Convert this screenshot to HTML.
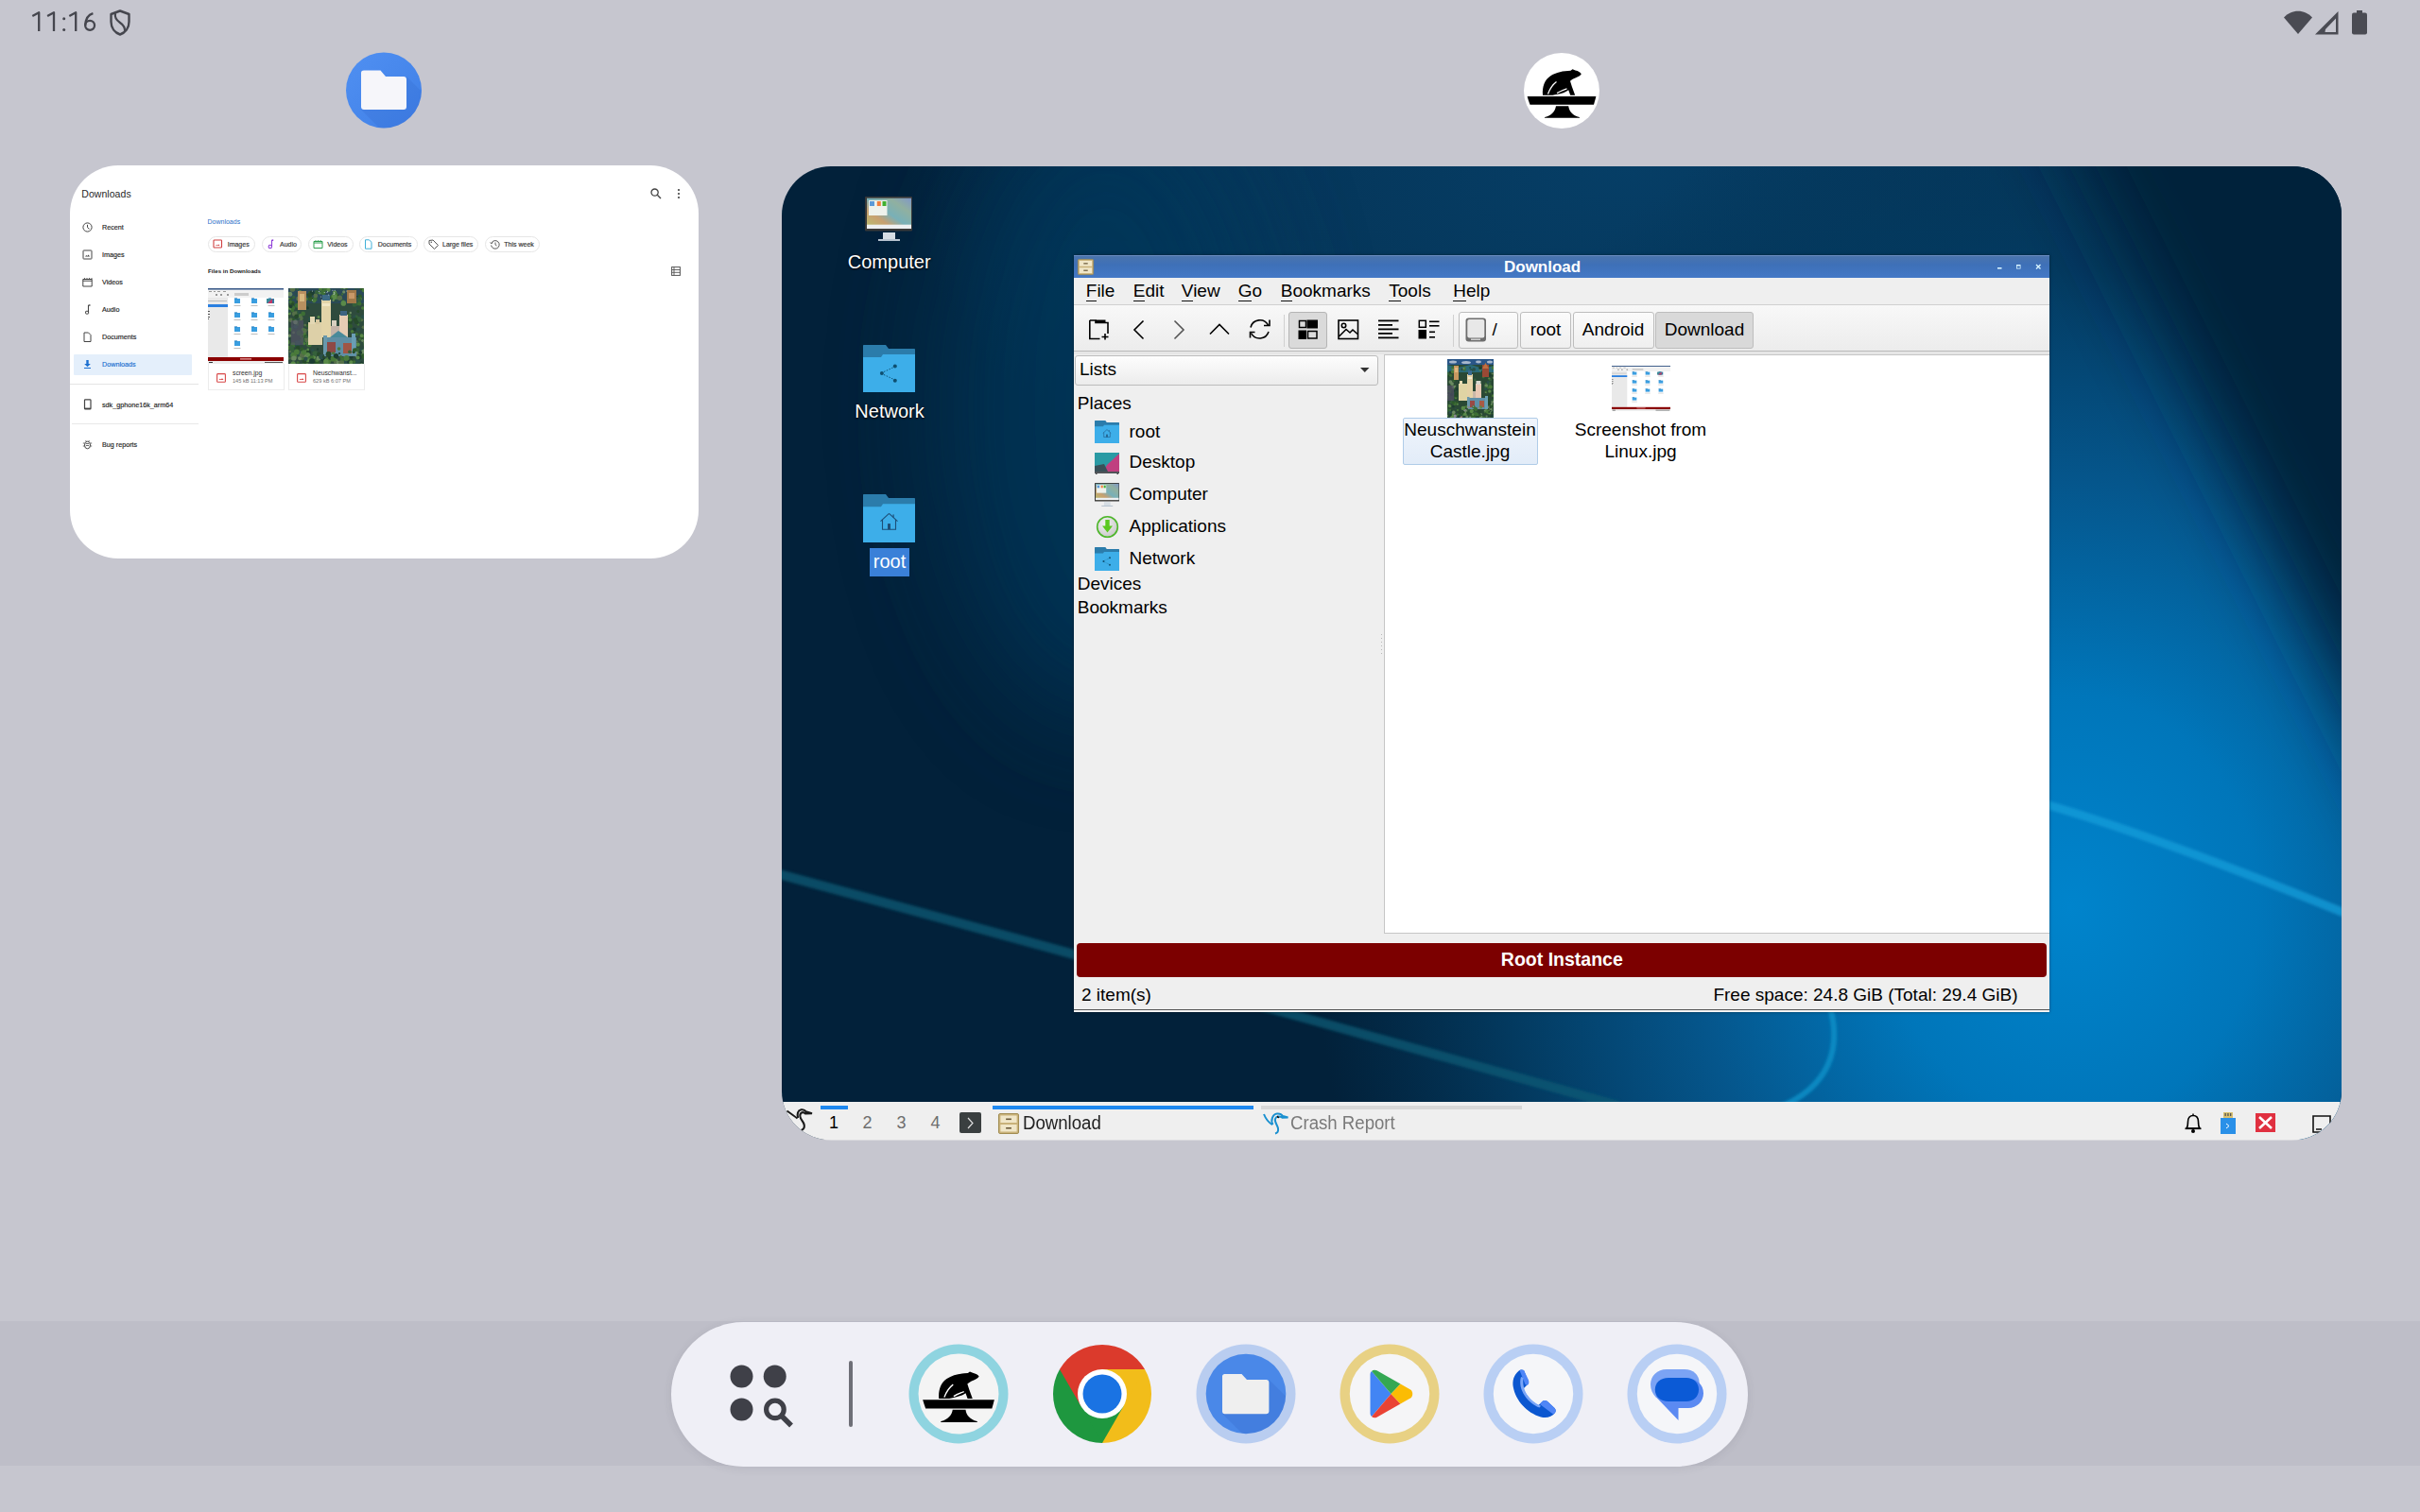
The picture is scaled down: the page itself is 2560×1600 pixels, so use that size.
<!DOCTYPE html>
<html><head><meta charset="utf-8">
<style>
*{margin:0;padding:0;box-sizing:border-box}
html,body{width:2560px;height:1600px;overflow:hidden;background:#c6c6cf;font-family:"Liberation Sans",sans-serif;position:relative}
.a{position:absolute}
.t{position:absolute;white-space:nowrap;line-height:1}
svg{position:absolute;overflow:visible}
svg.c{overflow:hidden}
</style></head><body>
<div class="a" style="left:0px;top:1398px;width:2560px;height:153px;background:#bebec8"></div>
<svg style="left:0px;top:0px;" width="110" height="40" viewBox="0 0 110 40"><g fill="none" stroke="#45464e" stroke-width="2.3" stroke-linejoin="round">
<path d="M34.3 17 L41.2 13.2 V33"/><path d="M50.1 17 L57 13.2 V33"/><path d="M73.3 17 L80.2 13.2 V33"/>
<path d="M98.4 14.2 C94 15.5 90.5 20 90.2 26.9"/><circle cx="95.1" cy="26.85" r="4.95"/></g>
<g fill="#45464e"><circle cx="67.7" cy="19.8" r="1.5"/><circle cx="67.7" cy="31.6" r="1.5"/></g></svg>
<svg style="left:116px;top:10px;" width="22" height="28" viewBox="0 0 22 28"><path d="M11 1.5 L20.5 5 V13 C20.5 19.5 16.5 24.5 11 26.5 C5.5 24.5 1.5 19.5 1.5 13 V5 Z" fill="none" stroke="#45464e" stroke-width="2.4" stroke-linejoin="round"/><path d="M6 4 C5 9 8 12 11 14 C14 16 16.5 19 16 23.5" fill="none" stroke="#45464e" stroke-width="2.2"/></svg>
<svg style="left:2416px;top:11px;" width="90" height="27" viewBox="0 0 90 27"><path d="M0 7.5 C8 -1.5 22 -1.5 30 7.5 L15 25 Z" fill="#4a4b53"/>
<path d="M33 25.5 L57.5 1 V25.5 Z M43.5 23 H55 V8.5 L44 20 Z" fill="#4a4b53" fill-rule="evenodd"/>
<rect x="72" y="2.5" width="16" height="23" rx="2" fill="#4a4b53"/><rect x="77" y="0" width="6" height="4" fill="#4a4b53"/></svg>
<svg style="left:366px;top:55px;" width="80" height="80" viewBox="0 0 80 80"><defs><linearGradient id="fblue" x1="0" y1="0" x2="1" y2="1"><stop offset="0" stop-color="#5090f2"/><stop offset="1" stop-color="#3f7fe6"/></linearGradient></defs>
<circle cx="40" cy="40.5" r="40" fill="url(#fblue)"/><clipPath id="ftc"><circle cx="40" cy="40.5" r="40"/></clipPath><path d="M16 61 H64 V26 L95 57 V95 H50 Z" fill="#2a5cc0" opacity="0.18" clip-path="url(#ftc)"/>
<path d="M16 22 C16 20.3 17.3 19.5 19 19.5 H36.5 L42 26 H61 C62.7 26 64 27.3 64 29 V58 C64 59.7 62.7 61 61 61 H19 C17.3 61 16 59.7 16 58 Z" fill="#f6f6fa"/></svg>
<div class="a" style="left:1612px;top:56px;width:80px;height:80px;border-radius:50%;background:#fff"></div>
<svg style="left:1612px;top:56px;" width="80" height="80" viewBox="0 0 80 80"><g fill="#000">
<path d="M20 44.8 C19.3 36 22 28.5 28 24.5 C34 20.5 42 19 49.5 18.8 L51.5 17.3 L54.5 18.6 C57.5 19.3 59.8 20.5 60.8 22.2 C59.8 23.8 58 25 55 26.2 C52.5 27.2 50.5 28.3 49 29.8 L50.8 35.5 L54.2 44.8 L49.2 44.8 L47.2 39.2 C44.5 41.5 40 43 34 44 L30.5 44.8 Z"/>
<path d="M3.6 45.9 H76.4 L75.2 50.5 L74 54.8 H6.5 L5 50.5 Z"/>
<path d="M34 56.2 H47.2 C48 62 51.5 66 58.8 68 L59.2 68.8 H21.8 L22.2 68 C29.5 66 33 62 34 56.2 Z"/>
</g>
<path d="M25.5 43.5 C27.5 38 30.5 33.5 34.5 30.5 M35 42.5 C38.5 40.5 42 39 45.5 37.8" stroke="#fff" stroke-width="1.3" fill="none"/></svg>
<div class="a" style="left:74px;top:175px;width:665px;height:416px;border-radius:51px;background:#fff;overflow:hidden"></div>
<div class="t" style="left:86.30px;top:199.91px;font-size:10.5px;color:#1f1f1f;letter-spacing:0.05px">Downloads</div>
<svg style="left:688px;top:199px;" width="12" height="12" viewBox="0 0 12 12"><circle cx="4.6" cy="4.6" r="3.6" fill="none" stroke="#444" stroke-width="1.3"/><path d="M7.3 7.3 L11 11" stroke="#444" stroke-width="1.4"/></svg>
<svg style="left:716px;top:199px;" width="4" height="12" viewBox="0 0 4 12"><g fill="#444"><circle cx="2" cy="2" r="1.1"/><circle cx="2" cy="6" r="1.1"/><circle cx="2" cy="10" r="1.1"/></g></svg>
<svg style="left:87px;top:234.5px;" width="11" height="11" viewBox="0 0 11 11"><circle cx="5.5" cy="5.5" r="4.6" fill="none" stroke="#444" stroke-width="1"/><path d="M5.5 2.8 V5.7 L7.6 7.3" fill="none" stroke="#444" stroke-width="1"/></svg>
<div class="t" style="left:108.00px;top:236.71px;font-size:7.2px;color:#222;-webkit-text-stroke:0.15px #222">Recent</div>
<svg style="left:87px;top:263.5px;" width="11" height="11" viewBox="0 0 11 11"><rect x="1" y="1" width="9" height="9" rx="0.6" fill="none" stroke="#444" stroke-width="1"/><path d="M3 7.5 L4.3 6 L5.3 7 L6.5 5.5 L8 7.5 Z" fill="#444"/></svg>
<div class="t" style="left:108.00px;top:265.71px;font-size:7.2px;color:#222;-webkit-text-stroke:0.15px #222">Images</div>
<svg style="left:87px;top:292.9px;" width="11" height="11" viewBox="0 0 11 11"><path d="M0.8 2.5 H10.2 V10 H0.8 Z M0.8 4.2 H10.2" fill="none" stroke="#444" stroke-width="1"/><path d="M2.5 1 V2.5 M5 1 V2.5 M7.5 1 V2.5 M10 1 V2.5" stroke="#444" stroke-width="0.8"/></svg>
<div class="t" style="left:108.00px;top:295.11px;font-size:7.2px;color:#222;-webkit-text-stroke:0.15px #222">Videos</div>
<svg style="left:87px;top:322.0px;" width="11" height="11" viewBox="0 0 11 11"><path d="M6.5 1 V8.5" stroke="#444" stroke-width="1.1"/><path d="M6.5 1 H8.5" stroke="#444" stroke-width="1.4"/><rect x="3.6" y="7.3" width="3" height="2.8" rx="0.5" fill="none" stroke="#444" stroke-width="1"/></svg>
<div class="t" style="left:108.00px;top:324.21px;font-size:7.2px;color:#222;-webkit-text-stroke:0.15px #222">Audio</div>
<svg style="left:87px;top:351.1px;" width="11" height="11" viewBox="0 0 11 11"><path d="M2 1 H6.5 L9 3.5 V10.5 H2 Z" fill="none" stroke="#444" stroke-width="1"/></svg>
<div class="t" style="left:108.00px;top:353.31px;font-size:7.2px;color:#222;-webkit-text-stroke:0.15px #222">Documents</div>
<div class="a" style="left:78px;top:375px;width:125px;height:21.5px;background:#e4effb;border-radius:1px"></div>
<svg style="left:87px;top:380px;" width="11" height="11" viewBox="0 0 11 11"><path d="M4.3 1 H6.7 V5 H8.8 L5.5 8.3 L2.2 5 H4.3 Z" fill="#1b6fd0"/><rect x="2" y="9" width="7" height="1" fill="#1b6fd0"/></svg>
<div class="t" style="left:108.00px;top:382.41px;font-size:7.2px;color:#1b6fd0;-webkit-text-stroke:0.15px #1b6fd0">Downloads</div>
<div class="a" style="left:74px;top:406.3px;width:136px;height:0.8px;background:#e4e4e4"></div>
<svg style="left:87px;top:422px;" width="11" height="12" viewBox="0 0 11 12"><rect x="2.5" y="0.8" width="6.5" height="10.2" rx="0.8" fill="none" stroke="#444" stroke-width="1.2"/><rect x="2.5" y="9.6" width="6.5" height="1.4" fill="#444"/></svg>
<div class="t" style="left:108.00px;top:424.71px;font-size:7.2px;color:#222;-webkit-text-stroke:0.15px #222">sdk_gphone16k_arm64</div>
<div class="a" style="left:76px;top:447.5px;width:134px;height:0.8px;background:#e8e8e8"></div>
<svg style="left:87px;top:464.5px;" width="11" height="11" viewBox="0 0 11 11"><ellipse cx="5.5" cy="6" rx="3" ry="3.8" fill="none" stroke="#444" stroke-width="1"/><path d="M4 4.5 H7 M4 6.5 H7 M0.8 4 H2.5 M8.5 4 H10.2 M0.8 7 H2.5 M8.5 7 H10.2 M3.5 1 L4.5 2.3 M7.5 1 L6.5 2.3" stroke="#444" stroke-width="0.8"/></svg>
<div class="t" style="left:108.00px;top:467.11px;font-size:7.2px;color:#222;-webkit-text-stroke:0.15px #222">Bug reports</div>
<div class="t" style="left:219.50px;top:231.07px;font-size:7px;color:#2a6fc9;">Downloads</div>
<div class="a" style="left:220.2px;top:250.2px;width:49.5px;height:16.4px;border:0.8px solid #e6e6e6;border-radius:8.5px;background:#fff"></div>
<svg style="left:225.2px;top:253.3px;" width="11" height="11" viewBox="0 0 11 11"><rect x="1" y="1" width="8.5" height="8" rx="0.8" fill="none" stroke="#d04040" stroke-width="1.1"/><path d="M3 7 L4 6 L5 6.8 L6.2 5.5 L7.5 7 Z" fill="#d04040"/></svg>
<div class="t" style="left:240.70px;top:255.07px;font-size:7px;color:#303030;-webkit-text-stroke:0.15px #303030">Images</div>
<div class="a" style="left:276.8px;top:250.2px;width:42.69999999999999px;height:16.4px;border:0.8px solid #e6e6e6;border-radius:8.5px;background:#fff"></div>
<svg style="left:281.8px;top:253.3px;" width="11" height="11" viewBox="0 0 11 11"><path d="M5.5 1 V8" stroke="#9040d8" stroke-width="1.1"/><path d="M5.5 1.2 H7.2" stroke="#9040d8" stroke-width="1.6"/><circle cx="3.8" cy="8" r="1.7" fill="none" stroke="#9040d8" stroke-width="1.1"/></svg>
<div class="t" style="left:296.00px;top:255.07px;font-size:7px;color:#303030;-webkit-text-stroke:0.15px #303030">Audio</div>
<div class="a" style="left:325.9px;top:250.2px;width:48.0px;height:16.4px;border:0.8px solid #e6e6e6;border-radius:8.5px;background:#fff"></div>
<svg style="left:330.9px;top:253.3px;" width="11" height="11" viewBox="0 0 11 11"><path d="M1 2.5 H10 V9.5 H1 Z M1 4 H10" fill="none" stroke="#30a050" stroke-width="1"/><path d="M3 1 V2.5 M5.5 1 V2.5 M8 1 V2.5" stroke="#30a050" stroke-width="0.8"/></svg>
<div class="t" style="left:346.30px;top:255.07px;font-size:7px;color:#303030;-webkit-text-stroke:0.15px #303030">Videos</div>
<div class="a" style="left:380.4px;top:250.2px;width:61.60000000000002px;height:16.4px;border:0.8px solid #e6e6e6;border-radius:8.5px;background:#fff"></div>
<svg style="left:385.4px;top:253.3px;" width="11" height="11" viewBox="0 0 11 11"><path d="M1.5 0.8 H5.5 L8 3.3 V10.2 H1.5 Z" fill="none" stroke="#40b0d8" stroke-width="1"/></svg>
<div class="t" style="left:399.80px;top:255.07px;font-size:7px;color:#303030;-webkit-text-stroke:0.15px #303030">Documents</div>
<div class="a" style="left:447.7px;top:250.2px;width:58.69999999999999px;height:16.4px;border:0.8px solid #e6e6e6;border-radius:8.5px;background:#fff"></div>
<svg style="left:452.7px;top:253.3px;" width="11" height="11" viewBox="0 0 11 11"><path d="M1 1.5 L5 1 L10.5 6.5 L6.5 10.5 L1 5 Z" fill="none" stroke="#555" stroke-width="1"/><circle cx="3.3" cy="3.3" r="0.8" fill="#555"/></svg>
<div class="t" style="left:468.00px;top:255.07px;font-size:7px;color:#303030;-webkit-text-stroke:0.15px #303030">Large files</div>
<div class="a" style="left:512.6px;top:250.2px;width:58.69999999999993px;height:16.4px;border:0.8px solid #e6e6e6;border-radius:8.5px;background:#fff"></div>
<svg style="left:517.6px;top:253.3px;" width="11" height="11" viewBox="0 0 11 11"><path d="M2 4 A4.3 4.3 0 1 1 1.6 6.5" fill="none" stroke="#555" stroke-width="1"/><path d="M0.5 3.5 L1.8 5 L3.2 3.6" fill="none" stroke="#555" stroke-width="0.9"/><path d="M6 3.5 V6 L7.5 7" fill="none" stroke="#555" stroke-width="0.9"/></svg>
<div class="t" style="left:533.30px;top:255.07px;font-size:7px;color:#303030;-webkit-text-stroke:0.15px #303030">This week</div>
<div class="t" style="left:220.00px;top:283.75px;font-size:6.2px;color:#202020;font-weight:700;">Files in Downloads</div>
<svg style="left:710px;top:282px;" width="10" height="10" viewBox="0 0 10 10"><rect x="0.6" y="0.6" width="8.8" height="8.8" fill="none" stroke="#555" stroke-width="1"/><path d="M0.6 3.5 H9.4 M0.6 6.3 H9.4 M3 0.6 V9.4" stroke="#555" stroke-width="0.9"/></svg>
<svg class="c" style="left:220px;top:305px;" width="80" height="80" viewBox="0 0 80 80"><rect width="80" height="80" fill="#fff"/><rect x="0" y="0" width="80" height="1.6" fill="#3a5a88"/><rect x="0" y="2" width="80" height="8" fill="#f2f2f2"/><g fill="#999"><rect x="1" y="3" width="3" height="1"/><rect x="6" y="3" width="2" height="1"/><rect x="10" y="3" width="3" height="1"/><rect x="16" y="3" width="3" height="1"/><rect x="8" y="6" width="2" height="2"/><rect x="13" y="6" width="2" height="2"/><rect x="20" y="6" width="2" height="2"/><rect x="28" y="5" width="15" height="3" fill="#ccc"/></g><rect x="0" y="10" width="21" height="63" fill="#e9e9e9"/><rect x="0" y="13" width="20" height="1" fill="#bbb"/><rect x="0" y="17" width="21" height="3" fill="#2a7fe0"/><g fill="#555"><rect x="0" y="24" width="2" height="1"/><rect x="0" y="27" width="2" height="1"/><rect x="0" y="30" width="2" height="1"/><rect x="0" y="32" width="1" height="1"/></g><rect x="28" y="11" width="6" height="5" fill="#3a9ee0"/><rect x="28" y="10.4" width="3" height="1" fill="#2a80c0"/><rect x="27.5" y="18" width="7" height="0.8" fill="#777" opacity=".6"/><rect x="46" y="11" width="6" height="5" fill="#3a9ee0"/><rect x="46" y="10.4" width="3" height="1" fill="#2a80c0"/><rect x="45.5" y="18" width="7" height="0.8" fill="#777" opacity=".6"/><rect x="64" y="11" width="6" height="5" fill="#3a7aa0"/><rect x="64" y="10.4" width="3" height="1" fill="#2a80c0"/><rect x="63.5" y="18" width="7" height="0.8" fill="#777" opacity=".6"/><rect x="28" y="26" width="6" height="5" fill="#3a9ee0"/><rect x="28" y="25.4" width="3" height="1" fill="#2a80c0"/><rect x="27.5" y="33" width="7" height="0.8" fill="#777" opacity=".6"/><rect x="46" y="26" width="6" height="5" fill="#3a9ee0"/><rect x="46" y="25.4" width="3" height="1" fill="#2a80c0"/><rect x="45.5" y="33" width="7" height="0.8" fill="#777" opacity=".6"/><rect x="64" y="26" width="6" height="5" fill="#3a9ee0"/><rect x="64" y="25.4" width="3" height="1" fill="#2a80c0"/><rect x="63.5" y="33" width="7" height="0.8" fill="#777" opacity=".6"/><rect x="28" y="41" width="6" height="5" fill="#3a9ee0"/><rect x="28" y="40.4" width="3" height="1" fill="#2a80c0"/><rect x="27.5" y="48" width="7" height="0.8" fill="#777" opacity=".6"/><rect x="46" y="41" width="6" height="5" fill="#3a9ee0"/><rect x="46" y="40.4" width="3" height="1" fill="#2a80c0"/><rect x="45.5" y="48" width="7" height="0.8" fill="#777" opacity=".6"/><rect x="64" y="41" width="6" height="5" fill="#3a9ee0"/><rect x="64" y="40.4" width="3" height="1" fill="#2a80c0"/><rect x="63.5" y="48" width="7" height="0.8" fill="#777" opacity=".6"/><rect x="28" y="56" width="6" height="5" fill="#3a9ee0"/><rect x="28" y="55.4" width="3" height="1" fill="#2a80c0"/><rect x="27.5" y="63" width="7" height="0.8" fill="#777" opacity=".6"/><rect x="62" y="11" width="6" height="5" fill="#3a8a9a"/><path d="M68 11 V16 H63 Z" fill="#c03a6a"/><rect x="0" y="73" width="80" height="4" fill="#8a0000"/><rect x="34" y="74.3" width="12" height="1.2" fill="#f0b0b0"/><rect x="0" y="77" width="80" height="3" fill="#ededed"/><rect x="1" y="78" width="4" height="1" fill="#333"/><rect x="60" y="78" width="19" height="1" fill="#555"/></svg>
<svg class="c" style="left:305px;top:305px;" width="80" height="80" viewBox="0 0 80 80"><defs><filter id="cb" x="0" y="0" width="100%" height="100%"><feGaussianBlur stdDeviation="0.7"/></filter></defs><g filter="url(#cb)"><rect width="80" height="80" fill="#2f4c3e"/><rect width="80" height="16" fill="#2a4a58"/><circle cx="36.0" cy="45.0" r="1.8" fill="#2a5048"/><circle cx="69.8" cy="14.0" r="2.4" fill="#6a8a60"/><circle cx="23.5" cy="5.6" r="2.5" fill="#2f5a2c"/><circle cx="67.9" cy="3.3" r="1.1" fill="#264a2a"/><circle cx="22.7" cy="-1.6" r="1.2" fill="#5a8a48"/><circle cx="32.2" cy="44.3" r="1.1" fill="#5a8a48"/><circle cx="3.9" cy="62.4" r="1.7" fill="#5a8a48"/><circle cx="30.5" cy="78.5" r="2.5" fill="#2f5a2c"/><circle cx="15.9" cy="75.9" r="1.1" fill="#1f3e30"/><circle cx="80.4" cy="31.4" r="1.1" fill="#264a2a"/><circle cx="25.9" cy="79.0" r="2.4" fill="#3d6e34"/><circle cx="9.3" cy="57.4" r="1.0" fill="#6a8a60"/><circle cx="64.9" cy="12.9" r="2.0" fill="#6a8a60"/><circle cx="40.7" cy="80.8" r="2.4" fill="#1f3e30"/><circle cx="52.1" cy="7.8" r="1.8" fill="#264a2a"/><circle cx="-2.0" cy="70.6" r="2.8" fill="#56704a"/><circle cx="23.5" cy="72.3" r="1.4" fill="#1f3e30"/><circle cx="81.7" cy="48.6" r="2.0" fill="#2f5a2c"/><circle cx="81.1" cy="15.9" r="1.5" fill="#56704a"/><circle cx="5.6" cy="46.9" r="1.4" fill="#56704a"/><circle cx="17.2" cy="49.3" r="2.3" fill="#4a7a3a"/><circle cx="60.1" cy="77.0" r="1.4" fill="#1f3e30"/><circle cx="72.1" cy="48.7" r="1.8" fill="#3d6e34"/><circle cx="7.2" cy="41.0" r="1.5" fill="#1f3e30"/><circle cx="19.6" cy="67.2" r="2.1" fill="#5a8a48"/><circle cx="41.7" cy="76.1" r="2.8" fill="#4a7a3a"/><circle cx="17.2" cy="45.0" r="2.5" fill="#56704a"/><circle cx="4.2" cy="15.8" r="2.6" fill="#2f5a2c"/><circle cx="3.8" cy="32.6" r="1.4" fill="#2f5a2c"/><circle cx="12.8" cy="29.0" r="2.0" fill="#4a7a3a"/><circle cx="5.7" cy="9.6" r="1.8" fill="#34603a"/><circle cx="9.8" cy="0.9" r="1.0" fill="#34603a"/><circle cx="56.9" cy="78.9" r="1.0" fill="#3d6e34"/><circle cx="81.9" cy="4.3" r="2.0" fill="#2f5a2c"/><circle cx="73.6" cy="59.9" r="2.3" fill="#34603a"/><circle cx="27.6" cy="55.6" r="2.6" fill="#1f3e30"/><circle cx="77.3" cy="0.5" r="1.9" fill="#2f5a2c"/><circle cx="49.1" cy="4.7" r="2.2" fill="#5a8a48"/><circle cx="71.9" cy="59.2" r="1.7" fill="#56704a"/><circle cx="5.4" cy="-0.1" r="2.7" fill="#3d6e34"/><circle cx="39.8" cy="49.6" r="1.5" fill="#2f5a2c"/><circle cx="28.9" cy="10.0" r="2.1" fill="#2a5048"/><circle cx="12.2" cy="74.1" r="2.2" fill="#6a8a60"/><circle cx="19.1" cy="51.3" r="2.4" fill="#264a2a"/><circle cx="71.9" cy="30.3" r="2.0" fill="#34603a"/><circle cx="15.6" cy="9.3" r="1.6" fill="#2f5a2c"/><circle cx="57.7" cy="77.8" r="1.5" fill="#4a7a3a"/><circle cx="7.5" cy="37.6" r="2.7" fill="#1f3e30"/><circle cx="64.9" cy="80.7" r="1.2" fill="#3d6e34"/><circle cx="78.5" cy="55.5" r="1.4" fill="#6a8a60"/><circle cx="19.5" cy="58.0" r="2.4" fill="#2a5048"/><circle cx="58.0" cy="13.0" r="1.5" fill="#34603a"/><circle cx="43.3" cy="77.5" r="1.9" fill="#4a7a3a"/><circle cx="31.1" cy="64.5" r="1.2" fill="#1f3e30"/><circle cx="8.9" cy="36.1" r="2.1" fill="#2f5a2c"/><circle cx="29.7" cy="45.8" r="2.4" fill="#34603a"/><circle cx="58.3" cy="15.9" r="2.8" fill="#5a8a48"/><circle cx="74.4" cy="69.9" r="1.6" fill="#3d6e34"/><circle cx="1.1" cy="26.7" r="1.8" fill="#5a8a48"/><circle cx="38.9" cy="0.4" r="2.5" fill="#3d6e34"/><circle cx="34.0" cy="0.9" r="2.0" fill="#4a7a3a"/><circle cx="37.5" cy="82.0" r="2.6" fill="#2a5048"/><circle cx="68.6" cy="55.9" r="2.7" fill="#6a8a60"/><circle cx="45.2" cy="11.8" r="1.9" fill="#2a5048"/><circle cx="19.5" cy="54.4" r="2.7" fill="#56704a"/><circle cx="15.5" cy="69.5" r="2.7" fill="#2a5048"/><circle cx="20.9" cy="39.8" r="1.7" fill="#3d6e34"/><circle cx="79.4" cy="41.3" r="1.7" fill="#56704a"/><circle cx="8.2" cy="5.8" r="1.3" fill="#2a5048"/><circle cx="36.6" cy="75.3" r="2.4" fill="#1f3e30"/><circle cx="20.6" cy="37.7" r="1.2" fill="#1f3e30"/><circle cx="73.7" cy="76.6" r="2.7" fill="#2a5048"/><circle cx="75.7" cy="8.9" r="2.4" fill="#2f5a2c"/><circle cx="1.0" cy="11.1" r="1.0" fill="#5a8a48"/><circle cx="6.8" cy="59.4" r="1.2" fill="#2a5048"/><circle cx="71.8" cy="-0.0" r="2.1" fill="#2a5048"/><circle cx="49.7" cy="43.2" r="2.0" fill="#264a2a"/><circle cx="70.0" cy="17.5" r="2.3" fill="#34603a"/><circle cx="73.8" cy="24.5" r="1.6" fill="#264a2a"/><circle cx="16.3" cy="81.9" r="2.6" fill="#4a7a3a"/><circle cx="72.7" cy="9.1" r="1.2" fill="#1f3e30"/><circle cx="6.1" cy="67.9" r="1.8" fill="#4a7a3a"/><circle cx="14.9" cy="50.8" r="2.4" fill="#3d6e34"/><circle cx="14.9" cy="55.3" r="2.6" fill="#34603a"/><circle cx="7.7" cy="40.5" r="2.4" fill="#2a5048"/><circle cx="81.9" cy="68.0" r="2.4" fill="#6a8a60"/><circle cx="6.9" cy="1.1" r="2.0" fill="#2a5048"/><circle cx="74.0" cy="38.4" r="1.3" fill="#3d6e34"/><circle cx="15.1" cy="68.6" r="2.8" fill="#3d6e34"/><circle cx="46.7" cy="9.3" r="2.2" fill="#3d6e34"/><circle cx="-0.9" cy="56.9" r="2.5" fill="#4a7a3a"/><circle cx="75.4" cy="48.8" r="1.2" fill="#2f5a2c"/><circle cx="25.2" cy="5.1" r="2.5" fill="#1f3e30"/><circle cx="7.8" cy="60.4" r="1.3" fill="#1f3e30"/><circle cx="9.2" cy="25.7" r="2.0" fill="#34603a"/><circle cx="58.7" cy="3.9" r="1.6" fill="#6a8a60"/><circle cx="6.5" cy="72.6" r="2.8" fill="#56704a"/><circle cx="2.2" cy="20.9" r="2.7" fill="#5a8a48"/><circle cx="42.8" cy="30.7" r="2.2" fill="#3d6e34"/><circle cx="62.0" cy="80.3" r="1.0" fill="#56704a"/><circle cx="7.1" cy="17.9" r="1.8" fill="#2a5048"/><circle cx="2.2" cy="14.4" r="1.7" fill="#3d6e34"/><circle cx="19.7" cy="21.2" r="1.6" fill="#2a5048"/><circle cx="40.7" cy="79.2" r="2.0" fill="#3d6e34"/><circle cx="76.1" cy="11.4" r="1.8" fill="#4a7a3a"/><circle cx="69.9" cy="43.5" r="2.1" fill="#1f3e30"/><circle cx="77.4" cy="33.3" r="1.9" fill="#56704a"/><circle cx="20.7" cy="76.1" r="2.2" fill="#5a8a48"/><circle cx="0.3" cy="62.9" r="2.1" fill="#4a7a3a"/><circle cx="16.8" cy="58.4" r="1.5" fill="#264a2a"/><circle cx="1.8" cy="6.3" r="2.5" fill="#6a8a60"/><circle cx="10.1" cy="78.6" r="1.4" fill="#3d6e34"/><circle cx="2.2" cy="33.0" r="1.2" fill="#2f5a2c"/><circle cx="28.0" cy="11.0" r="1.7" fill="#4a7a3a"/><circle cx="42.6" cy="81.8" r="2.7" fill="#4a7a3a"/><circle cx="18.0" cy="7.6" r="2.6" fill="#2a5048"/><circle cx="18.9" cy="80.3" r="2.6" fill="#2f5a2c"/><circle cx="50.8" cy="-1.2" r="1.5" fill="#2f5a2c"/><circle cx="50.4" cy="6.6" r="2.0" fill="#3d6e34"/><circle cx="61.5" cy="74.7" r="1.3" fill="#264a2a"/><circle cx="15.7" cy="26.9" r="2.3" fill="#3d6e34"/><circle cx="65.4" cy="35.6" r="2.5" fill="#264a2a"/><circle cx="10.7" cy="10.9" r="2.5" fill="#56704a"/><circle cx="75.3" cy="33.9" r="1.7" fill="#3d6e34"/><circle cx="24.1" cy="74.5" r="2.1" fill="#5a8a48"/><circle cx="72.1" cy="16.4" r="2.2" fill="#34603a"/><circle cx="28.8" cy="7.9" r="2.3" fill="#56704a"/><circle cx="48.0" cy="73.8" r="2.2" fill="#5a8a48"/><circle cx="24.7" cy="31.6" r="2.6" fill="#264a2a"/><circle cx="5.1" cy="67.6" r="1.0" fill="#1f3e30"/><circle cx="47.7" cy="12.9" r="1.2" fill="#6a8a60"/><circle cx="72.0" cy="21.6" r="1.0" fill="#2a5048"/><circle cx="2.8" cy="11.3" r="1.5" fill="#2f5a2c"/><circle cx="4.9" cy="59.9" r="2.6" fill="#3d6e34"/><circle cx="0.2" cy="52.9" r="1.2" fill="#1f3e30"/><circle cx="18.6" cy="16.5" r="2.4" fill="#2a5048"/><circle cx="65.8" cy="26.0" r="1.2" fill="#6a8a60"/><circle cx="74.9" cy="32.5" r="2.5" fill="#34603a"/><circle cx="69.7" cy="65.7" r="2.5" fill="#6a8a60"/><circle cx="78.5" cy="51.8" r="1.9" fill="#2f5a2c"/><circle cx="65.4" cy="33.4" r="1.8" fill="#4a7a3a"/><circle cx="18.6" cy="11.6" r="2.1" fill="#4a7a3a"/><circle cx="21.0" cy="72.4" r="1.8" fill="#3d6e34"/><circle cx="23.5" cy="11.1" r="2.7" fill="#2f5a2c"/><circle cx="61.3" cy="-0.6" r="1.9" fill="#2f5a2c"/><circle cx="40.7" cy="35.1" r="1.7" fill="#5a8a48"/><circle cx="50.6" cy="77.1" r="2.0" fill="#5a8a48"/><circle cx="38.7" cy="31.8" r="2.2" fill="#3d6e34"/><circle cx="77.6" cy="65.3" r="1.7" fill="#2a5048"/><circle cx="64.8" cy="63.0" r="2.4" fill="#2f5a2c"/><circle cx="11.2" cy="25.0" r="1.5" fill="#2a5048"/><circle cx="9.0" cy="60.3" r="2.1" fill="#2a5048"/><circle cx="42.9" cy="10.7" r="2.4" fill="#2f5a2c"/><circle cx="15.2" cy="75.0" r="1.3" fill="#4a7a3a"/><circle cx="4.9" cy="20.7" r="2.3" fill="#3d6e34"/><circle cx="72.7" cy="56.3" r="1.1" fill="#56704a"/><circle cx="13.8" cy="14.2" r="2.2" fill="#6a8a60"/><circle cx="15.5" cy="43.6" r="1.9" fill="#4a7a3a"/><circle cx="77.5" cy="79.0" r="1.6" fill="#1f3e30"/><circle cx="4.4" cy="23.7" r="1.8" fill="#3d6e34"/><circle cx="31.1" cy="36.8" r="2.5" fill="#6a8a60"/><circle cx="-1.0" cy="29.7" r="2.3" fill="#264a2a"/><circle cx="22.7" cy="7.5" r="2.4" fill="#264a2a"/><circle cx="73.7" cy="10.8" r="2.1" fill="#2a5048"/><circle cx="61.0" cy="78.1" r="2.4" fill="#2a5048"/><circle cx="59.4" cy="25.7" r="2.0" fill="#34603a"/><circle cx="50.2" cy="9.0" r="2.1" fill="#4a7a3a"/><circle cx="13.1" cy="31.8" r="2.5" fill="#56704a"/><circle cx="57.1" cy="6.4" r="1.1" fill="#3d6e34"/><circle cx="67.2" cy="75.9" r="1.3" fill="#264a2a"/><circle cx="31.7" cy="56.8" r="2.4" fill="#56704a"/><circle cx="23.8" cy="35.1" r="2.0" fill="#264a2a"/><circle cx="49.4" cy="11.3" r="2.4" fill="#5a8a48"/><circle cx="9.9" cy="57.9" r="2.8" fill="#2a5048"/><circle cx="81.9" cy="57.4" r="2.7" fill="#56704a"/><circle cx="77.4" cy="50.7" r="1.4" fill="#3d6e34"/><circle cx="9.4" cy="38.1" r="1.8" fill="#34603a"/><circle cx="25.7" cy="76.0" r="1.7" fill="#6a8a60"/><circle cx="72.2" cy="36.0" r="2.3" fill="#264a2a"/><circle cx="73.9" cy="43.6" r="2.0" fill="#2a5048"/><circle cx="74.9" cy="12.2" r="2.3" fill="#34603a"/><circle cx="48.5" cy="8.3" r="2.5" fill="#5a8a48"/><circle cx="28.5" cy="11.9" r="2.1" fill="#3d6e34"/><circle cx="76.1" cy="81.9" r="1.2" fill="#1f3e30"/><circle cx="11.3" cy="32.6" r="1.1" fill="#2a5048"/><circle cx="54.4" cy="10.2" r="2.7" fill="#56704a"/><circle cx="6.6" cy="27.0" r="2.6" fill="#56704a"/><circle cx="81.5" cy="68.4" r="2.5" fill="#1f3e30"/><circle cx="67.3" cy="7.9" r="1.2" fill="#2a5048"/><circle cx="0.0" cy="74.2" r="1.5" fill="#56704a"/><circle cx="73.6" cy="59.5" r="2.1" fill="#5a8a48"/><circle cx="72.1" cy="71.7" r="1.4" fill="#6a8a60"/><circle cx="18.4" cy="71.3" r="2.8" fill="#6a8a60"/><circle cx="23.7" cy="31.2" r="1.4" fill="#3d6e34"/><circle cx="81.9" cy="59.4" r="2.6" fill="#34603a"/><circle cx="70.8" cy="33.4" r="2.4" fill="#264a2a"/><circle cx="4.0" cy="41.6" r="1.2" fill="#2a5048"/><circle cx="59.2" cy="0.0" r="1.3" fill="#6a8a60"/><circle cx="73.2" cy="66.5" r="1.7" fill="#34603a"/><circle cx="10.0" cy="63.2" r="2.4" fill="#264a2a"/><circle cx="15.0" cy="70.2" r="2.2" fill="#2f5a2c"/><circle cx="14.4" cy="68.4" r="1.6" fill="#6a8a60"/><circle cx="-0.7" cy="51.4" r="2.3" fill="#2a5048"/><circle cx="15.0" cy="51.1" r="1.3" fill="#2f5a2c"/><circle cx="78.8" cy="21.0" r="1.8" fill="#4a7a3a"/><circle cx="26.1" cy="78.4" r="2.4" fill="#1f3e30"/><circle cx="4.6" cy="16.8" r="1.6" fill="#264a2a"/><circle cx="20.6" cy="58.5" r="1.9" fill="#5a8a48"/><circle cx="64.4" cy="29.3" r="2.2" fill="#3d6e34"/><circle cx="75.8" cy="54.0" r="1.5" fill="#3d6e34"/><circle cx="36.9" cy="4.4" r="2.7" fill="#3d6e34"/><circle cx="42.6" cy="1.8" r="2.1" fill="#5a8a48"/><circle cx="11.8" cy="81.0" r="1.3" fill="#4a7a3a"/><circle cx="21.4" cy="44.0" r="1.3" fill="#4a7a3a"/><circle cx="81.0" cy="0.8" r="1.8" fill="#56704a"/><circle cx="30.3" cy="76.1" r="1.9" fill="#4a7a3a"/><circle cx="3.4" cy="63.2" r="2.6" fill="#34603a"/><circle cx="41.7" cy="77.9" r="1.3" fill="#4a7a3a"/><circle cx="7.4" cy="34.6" r="2.2" fill="#2a5048"/><circle cx="17.8" cy="39.1" r="1.4" fill="#56704a"/><circle cx="79.5" cy="2.4" r="1.8" fill="#4a7a3a"/><circle cx="65.7" cy="40.3" r="2.3" fill="#2f5a2c"/><circle cx="4.1" cy="74.2" r="2.0" fill="#2a5048"/><circle cx="2.5" cy="33.7" r="2.3" fill="#56704a"/><circle cx="57.1" cy="78.4" r="1.2" fill="#56704a"/><circle cx="80.8" cy="10.1" r="1.8" fill="#2f5a2c"/><circle cx="-1.7" cy="32.4" r="1.9" fill="#3d6e34"/><circle cx="4.4" cy="0.9" r="2.8" fill="#56704a"/><circle cx="17.3" cy="19.3" r="2.0" fill="#264a2a"/><circle cx="33.1" cy="5.2" r="1.4" fill="#5a8a48"/><circle cx="26.3" cy="80.4" r="2.1" fill="#2f5a2c"/><circle cx="11.5" cy="47.2" r="2.8" fill="#34603a"/><circle cx="45.7" cy="74.6" r="2.6" fill="#4a7a3a"/><circle cx="27.2" cy="13.4" r="2.0" fill="#4a7a3a"/><circle cx="50.6" cy="13.3" r="1.9" fill="#2a5048"/><circle cx="30.2" cy="4.1" r="2.2" fill="#34603a"/><circle cx="77.7" cy="50.2" r="1.9" fill="#5a8a48"/><circle cx="16.3" cy="6.7" r="1.1" fill="#34603a"/><circle cx="9.5" cy="18.2" r="2.5" fill="#3d6e34"/><circle cx="-0.3" cy="25.1" r="1.7" fill="#3d6e34"/><circle cx="69.8" cy="30.0" r="1.5" fill="#2a5048"/><circle cx="39.0" cy="13.8" r="1.9" fill="#4a7a3a"/><circle cx="0.7" cy="24.2" r="1.8" fill="#2a5048"/><circle cx="71.9" cy="68.1" r="2.0" fill="#6a8a60"/><circle cx="32.0" cy="30.5" r="1.4" fill="#5a8a48"/><circle cx="69.2" cy="60.8" r="1.9" fill="#2f5a2c"/><circle cx="65.9" cy="80.0" r="1.5" fill="#3d6e34"/><circle cx="75.2" cy="16.2" r="2.2" fill="#3d6e34"/><circle cx="78.2" cy="70.9" r="1.4" fill="#5a8a48"/><circle cx="5.6" cy="33.9" r="1.7" fill="#2f5a2c"/><circle cx="39.2" cy="76.2" r="1.5" fill="#5a8a48"/><circle cx="16.6" cy="75.7" r="1.4" fill="#4a7a3a"/><circle cx="60.4" cy="74.2" r="2.4" fill="#6a8a60"/><circle cx="56.8" cy="-0.1" r="1.7" fill="#34603a"/><circle cx="74.4" cy="74.6" r="1.5" fill="#1f3e30"/><circle cx="27.2" cy="72.9" r="2.0" fill="#5a8a48"/><circle cx="66.5" cy="72.5" r="2.2" fill="#1f3e30"/><circle cx="49.7" cy="78.2" r="1.7" fill="#56704a"/><circle cx="2.0" cy="43.6" r="2.1" fill="#3d6e34"/><circle cx="21.2" cy="67.7" r="2.6" fill="#1f3e30"/><circle cx="79.2" cy="30.3" r="2.4" fill="#2a5048"/><circle cx="20.9" cy="39.6" r="1.9" fill="#2f5a2c"/><circle cx="10.6" cy="14.2" r="1.4" fill="#264a2a"/><circle cx="17.7" cy="-1.9" r="2.0" fill="#1f3e30"/><circle cx="-1.7" cy="43.9" r="2.5" fill="#2a5048"/><circle cx="4.6" cy="67.2" r="2.6" fill="#34603a"/><circle cx="20.2" cy="6.7" r="1.0" fill="#264a2a"/><circle cx="56.4" cy="55.7" r="2.5" fill="#4a7a3a"/><circle cx="22.7" cy="32.8" r="1.7" fill="#2a5048"/><circle cx="57.3" cy="75.1" r="2.3" fill="#3d6e34"/><circle cx="81.1" cy="66.7" r="2.6" fill="#5a8a48"/><circle cx="7.5" cy="35.9" r="2.4" fill="#6a8a60"/><circle cx="1.4" cy="50.2" r="1.7" fill="#6a8a60"/><circle cx="2.5" cy="19.3" r="1.9" fill="#1f3e30"/><circle cx="19.2" cy="51.3" r="1.7" fill="#34603a"/><circle cx="13.4" cy="69.9" r="1.4" fill="#56704a"/><circle cx="67.6" cy="45.7" r="1.8" fill="#4a7a3a"/><circle cx="8.5" cy="29.7" r="2.2" fill="#264a2a"/><circle cx="52.8" cy="79.8" r="1.8" fill="#4a7a3a"/><circle cx="20.5" cy="20.8" r="1.5" fill="#1f3e30"/><circle cx="11.2" cy="81.8" r="2.6" fill="#264a2a"/><circle cx="22.0" cy="59.4" r="2.8" fill="#3d6e34"/><circle cx="32.0" cy="74.0" r="2.5" fill="#6a8a60"/><circle cx="12.4" cy="3.7" r="1.8" fill="#5a8a48"/><circle cx="16.8" cy="58.6" r="1.7" fill="#4a7a3a"/><circle cx="80.4" cy="30.7" r="2.2" fill="#2a5048"/><circle cx="21.7" cy="70.8" r="1.8" fill="#3d6e34"/><circle cx="44.7" cy="73.3" r="2.6" fill="#1f3e30"/><circle cx="8.1" cy="25.2" r="1.0" fill="#56704a"/><rect x="10" y="3" width="9" height="20" fill="#b89060"/><rect x="12" y="6" width="5" height="8" fill="#d8b880"/><rect x="62" y="2" width="10" height="14" fill="#a07848"/><rect x="64" y="5" width="6" height="6" fill="#c89868"/><rect x="3" y="34" width="13" height="26" fill="#5a5470" opacity=".55"/><rect x="21" y="36" width="15" height="24" fill="#ddd0a8"/><rect x="23" y="30" width="5" height="8" fill="#e4d8b4"/><rect x="29" y="33" width="4" height="5" fill="#d8c8a0"/><rect x="35" y="12" width="10" height="40" fill="#e2d4a8"/><rect x="36" y="7" width="8" height="6" fill="#3e6a84"/><rect x="36" y="16" width="8" height="3" fill="#f0e6c4"/><rect x="54" y="28" width="9" height="28" fill="#e6ccb4"/><rect x="55" y="24" width="7" height="5" fill="#3e6482"/><rect x="45" y="40" width="9" height="14" fill="#c4b4a8"/><rect x="46" y="34" width="5" height="6" fill="#d8d0c0"/><rect x="38" y="52" width="34" height="20" fill="#5e8ea4"/><rect x="41" y="57" width="9" height="11" fill="#8e4a44"/><rect x="58" y="58" width="9" height="11" fill="#a05444"/><rect x="67" y="48" width="4" height="22" fill="#6a9eb4"/><rect x="37" y="50" width="4" height="20" fill="#6898ac"/><path d="M44 52 L53 45 L63 52 Z" fill="#4a8a9a"/><circle cx="25.8" cy="65.5" r="1.6" fill="#2a5048"/><circle cx="20.8" cy="64.9" r="1.3" fill="#5a8a48"/><circle cx="53.6" cy="64.1" r="1.8" fill="#4a7a3a"/><circle cx="79.8" cy="67.6" r="2.8" fill="#6a8a60"/><circle cx="2.6" cy="70.3" r="2.2" fill="#2a5048"/><circle cx="4.6" cy="73.9" r="2.4" fill="#56704a"/><circle cx="20.2" cy="67.4" r="1.7" fill="#264a2a"/><circle cx="79.5" cy="72.0" r="2.7" fill="#2f5a2c"/><circle cx="14.1" cy="64.5" r="1.5" fill="#3d6e34"/><circle cx="54.0" cy="68.9" r="1.2" fill="#2a5048"/><circle cx="24.8" cy="73.3" r="1.2" fill="#264a2a"/><circle cx="5.1" cy="70.6" r="2.6" fill="#5a8a48"/><circle cx="64.8" cy="78.3" r="2.5" fill="#1f3e30"/><circle cx="24.6" cy="73.6" r="2.4" fill="#3d6e34"/><circle cx="74.9" cy="72.7" r="2.7" fill="#1f3e30"/><circle cx="20.0" cy="80.4" r="1.2" fill="#56704a"/><circle cx="11.3" cy="69.8" r="2.5" fill="#2a5048"/><circle cx="52.6" cy="78.6" r="1.9" fill="#6a8a60"/><circle cx="28.3" cy="69.0" r="2.8" fill="#34603a"/><circle cx="47.5" cy="68.8" r="1.6" fill="#4a7a3a"/><circle cx="16.9" cy="77.4" r="2.2" fill="#264a2a"/><circle cx="14.2" cy="65.9" r="1.5" fill="#34603a"/><circle cx="14.6" cy="64.4" r="1.9" fill="#2f5a2c"/><circle cx="32.3" cy="69.8" r="2.2" fill="#264a2a"/><circle cx="1.7" cy="67.1" r="1.3" fill="#56704a"/><circle cx="8.7" cy="81.8" r="2.0" fill="#264a2a"/><circle cx="39.9" cy="78.0" r="2.8" fill="#5a8a48"/><circle cx="5.6" cy="71.0" r="2.9" fill="#4a7a3a"/><circle cx="62.2" cy="73.5" r="1.2" fill="#1f3e30"/><circle cx="72.9" cy="65.0" r="2.3" fill="#34603a"/><circle cx="71.0" cy="79.4" r="2.3" fill="#2a5048"/><circle cx="77.5" cy="80.6" r="1.4" fill="#6a8a60"/><circle cx="34.9" cy="72.4" r="2.7" fill="#2a5048"/><circle cx="18.4" cy="74.8" r="2.2" fill="#2a5048"/><circle cx="73.6" cy="73.5" r="2.0" fill="#5a8a48"/><circle cx="47.5" cy="74.7" r="2.9" fill="#4a7a3a"/><circle cx="43.0" cy="69.9" r="1.7" fill="#56704a"/><circle cx="25.0" cy="77.3" r="3.0" fill="#1f3e30"/><circle cx="4.2" cy="81.4" r="2.6" fill="#6a8a60"/><circle cx="8.9" cy="67.4" r="2.9" fill="#4a7a3a"/><circle cx="66.3" cy="78.4" r="2.1" fill="#5a8a48"/><circle cx="5.2" cy="79.7" r="2.5" fill="#5a8a48"/><circle cx="41.4" cy="70.3" r="1.6" fill="#2f5a2c"/><circle cx="69.2" cy="67.5" r="1.7" fill="#264a2a"/><circle cx="5.9" cy="74.0" r="2.6" fill="#6a8a60"/><circle cx="70.1" cy="65.3" r="2.1" fill="#2f5a2c"/><circle cx="61.7" cy="73.9" r="2.8" fill="#4a7a3a"/><circle cx="64.9" cy="67.2" r="1.8" fill="#34603a"/><circle cx="76.4" cy="68.0" r="1.7" fill="#1f3e30"/><circle cx="14.5" cy="71.0" r="2.7" fill="#56704a"/><circle cx="37.3" cy="72.8" r="1.4" fill="#264a2a"/><circle cx="42.6" cy="69.7" r="2.9" fill="#264a2a"/><circle cx="44.8" cy="81.9" r="1.9" fill="#34603a"/><circle cx="56.0" cy="79.2" r="2.9" fill="#56704a"/><circle cx="16.7" cy="67.8" r="2.6" fill="#4a7a3a"/><circle cx="55.5" cy="72.4" r="1.4" fill="#3d6e34"/><circle cx="20.7" cy="70.2" r="2.3" fill="#5a8a48"/><circle cx="15.7" cy="81.9" r="2.4" fill="#34603a"/><circle cx="69.6" cy="77.9" r="1.6" fill="#3d6e34"/><circle cx="50.5" cy="71.6" r="2.7" fill="#1f3e30"/><circle cx="32.3" cy="3.6" r="0.5" fill="#c8d8e0"/><circle cx="25.4" cy="3.1" r="0.5" fill="#c8d8e0"/><circle cx="42.6" cy="7.0" r="0.5" fill="#c8d8e0"/><circle cx="41.7" cy="3.4" r="0.5" fill="#c8d8e0"/><circle cx="25.4" cy="12.5" r="0.5" fill="#c8d8e0"/><circle cx="61.9" cy="2.9" r="0.5" fill="#c8d8e0"/><circle cx="48.5" cy="4.7" r="0.5" fill="#c8d8e0"/><circle cx="41.0" cy="4.4" r="0.5" fill="#c8d8e0"/><circle cx="38.2" cy="4.6" r="0.5" fill="#c8d8e0"/><circle cx="48.1" cy="6.4" r="0.5" fill="#c8d8e0"/><circle cx="34.7" cy="9.0" r="0.5" fill="#c8d8e0"/><circle cx="49.0" cy="5.2" r="0.5" fill="#c8d8e0"/><circle cx="49.1" cy="2.2" r="0.5" fill="#c8d8e0"/><circle cx="46.9" cy="2.2" r="0.5" fill="#c8d8e0"/></g></svg>
<div class="a" style="left:220px;top:385px;width:80.5px;height:28px;border:0.8px solid #ececec;border-top:none;background:#fff"></div>
<div class="a" style="left:305px;top:385px;width:80.5px;height:28px;border:0.8px solid #ececec;border-top:none;background:#fff"></div>
<svg style="left:229px;top:394.5px;" width="10" height="10" viewBox="0 0 10 10"><rect x="0.6" y="0.6" width="8.8" height="8.6" rx="0.8" fill="none" stroke="#d84848" stroke-width="1.1"/><path d="M2.5 7 L3.8 5.8 L4.8 6.6 L6 5.3 L7.5 7 Z" fill="#d84848"/></svg>
<div class="t" style="left:246.00px;top:392.24px;font-size:6.8px;color:#303030;">screen.jpg</div>
<div class="t" style="left:246.00px;top:401.46px;font-size:5.6px;color:#707070;">145 kB 11:13 PM</div>
<svg style="left:314px;top:394.5px;" width="10" height="10" viewBox="0 0 10 10"><rect x="0.6" y="0.6" width="8.8" height="8.6" rx="0.8" fill="none" stroke="#d84848" stroke-width="1.1"/><path d="M2.5 7 L3.8 5.8 L4.8 6.6 L6 5.3 L7.5 7 Z" fill="#d84848"/></svg>
<div class="t" style="left:331.00px;top:392.24px;font-size:6.8px;color:#303030;">Neuschwanst...</div>
<div class="t" style="left:331.00px;top:401.46px;font-size:5.6px;color:#707070;">629 kB 6:07 PM</div>
<div class="a" style="left:0;top:0;width:2560px;height:1600px;clip-path:inset(176px 83px 393.5px 827px round 52px)">
<svg style="left:826px;top:175px" width="1651" height="1031" viewBox="826 175 1651 1031">
<defs>
<radialGradient id="glow" gradientUnits="userSpaceOnUse" cx="2190" cy="960" r="800" gradientTransform="translate(2190 960) scale(1 1.125) translate(-2190 -960)">
<stop offset="0" stop-color="#0084cc"/><stop offset="0.25" stop-color="#0076ba"/><stop offset="0.5" stop-color="#05568c"/><stop offset="0.75" stop-color="#033a60"/><stop offset="1" stop-color="#033558" stop-opacity="0"/>
</radialGradient>
<radialGradient id="topglow" gradientUnits="userSpaceOnUse" cx="1720" cy="175" r="760" gradientTransform="translate(1720 175) scale(1 0.6) translate(-1720 -175)">
<stop offset="0" stop-color="#063e66"/><stop offset="0.6" stop-color="#053558"/><stop offset="1" stop-color="#053558" stop-opacity="0"/>
</radialGradient>
<filter id="bl40" x="-50%" y="-50%" width="200%" height="200%"><feGaussianBlur stdDeviation="40"/></filter>
<filter id="bl60" x="-80%" y="-80%" width="260%" height="260%"><feGaussianBlur stdDeviation="60"/></filter>
<filter id="bl2"><feGaussianBlur stdDeviation="1.5"/></filter>
</defs>
<rect x="826" y="175" width="1651" height="1031" fill="#02213a"/>
<rect x="826" y="175" width="1651" height="1031" fill="url(#topglow)"/>
<rect x="826" y="175" width="1651" height="1031" fill="url(#glow)"/>
<ellipse cx="1170" cy="430" rx="170" ry="330" fill="#04385c" opacity="0.75" filter="url(#bl60)"/>
<polygon points="2135,40 2900,40 2900,1100 2665,1100" fill="#02203a" filter="url(#bl40)"/>
<path d="M820 924 Q1250 1040 1712 1170" fill="none" stroke="#0c5a74" stroke-width="10" opacity="0.75" filter="url(#bl2)"/>
<path d="M2160 850 C2230 870 2330 905 2480 966" fill="none" stroke="#18a0dc" stroke-width="9" opacity="0.7" filter="url(#bl2)"/>
<path d="M1936 1066 C1948 1110 1935 1150 1882 1172" fill="none" stroke="#1090c8" stroke-width="6" opacity="0.85" filter="url(#bl2)"/>
</svg>
<svg style="left:915px;top:208px;" width="50" height="47" viewBox="0 0 50 47"><g transform="scale(1.0000 1.0000)">
<defs><linearGradient id="scr50" x1="0" y1="1" x2="1" y2="0"><stop offset="0" stop-color="#b8c070"/><stop offset="0.3" stop-color="#c8a070"/><stop offset="0.5" stop-color="#78b0b8"/><stop offset="0.75" stop-color="#90b0a0"/><stop offset="1" stop-color="#8098c8"/></linearGradient></defs>
<rect x="0" y="0" width="50" height="36.5" rx="1" fill="#383838"/>
<rect x="2" y="1.7" width="47" height="32.3" fill="url(#scr50)"/>
<rect x="4" y="4" width="19.5" height="16" fill="#eef2ec"/>
<rect x="5" y="5" width="5" height="5" fill="#5b9ad8"/><rect x="12.8" y="5" width="4" height="5" fill="#f08040"/><rect x="18.5" y="5" width="4" height="5" fill="#40b030"/>
<rect x="2" y="29.7" width="47" height="4.3" fill="#eef0f2"/>
<rect x="19" y="38" width="13" height="8" fill="#d6dde4"/><rect x="14" y="45" width="23" height="2" fill="#b8c4d0"/>
</g></svg>
<div class="t" style="left:940.70px;top:266.67px;font-size:20px;color:#fff;text-shadow:0 0 2px rgba(0,0,0,.9),0 1px 2px rgba(0,0,0,.8);transform:translateX(-50%)">Computer</div>
<svg style="left:913px;top:365px;" width="55" height="50" viewBox="0 0 55 50"><g transform="scale(1.0000 1.0000)"><path d="M0 1 C0 0.4 0.4 0 1 0 H24 L27 4 H54 C54.6 4 55 4.4 55 5 V20 H0 Z" fill="#2b7cab"/><path d="M0 13 H19 L21 10 H55 V50 H0 Z" fill="#3daee9"/><g fill="#0e4f70"><circle cx="33.8" cy="22.4" r="2"/><circle cx="19.9" cy="30" r="2"/><circle cx="33.8" cy="37.7" r="2"/></g><path d="M31.5 24 L22 28.5 M22 31.5 L31.5 36" stroke="#0e4f70" stroke-width="1" stroke-dasharray="1.4 1.6"/></g></svg>
<div class="t" style="left:941.00px;top:425.07px;font-size:20px;color:#fff;text-shadow:0 0 2px rgba(0,0,0,.9),0 1px 2px rgba(0,0,0,.8);transform:translateX(-50%)">Network</div>
<svg style="left:913px;top:523px;" width="55" height="51" viewBox="0 0 55 51"><g transform="scale(1.0000 1.0200)"><path d="M0 1 C0 0.4 0.4 0 1 0 H24 L27 4 H54 C54.6 4 55 4.4 55 5 V20 H0 Z" fill="#2b7cab"/><path d="M0 13 H19 L21 10 H55 V50 H0 Z" fill="#3daee9"/><path d="M27.5 20 L18.5 28 M27.5 20 L36.5 28 M20.5 26.5 V36.5 H34.5 V26.5" fill="none" stroke="#1d4f78" stroke-width="1.1"/><rect x="26" y="30.5" width="3" height="6" fill="#1d4f78"/><rect x="31.5" y="21" width="1.2" height="3" fill="#1d4f78"/></g></svg>
<div class="a" style="left:920px;top:580px;width:42px;height:30px;background:#3a80d8"></div>
<div class="t" style="left:941.00px;top:584.07px;font-size:20px;color:#fff;transform:translateX(-50%)">root</div>
<div class="a" style="left:1136px;top:270px;width:1032px;height:801px;background:#efefef;box-shadow:0 0 3px rgba(0,0,0,.4)"></div>
<div class="a" style="left:1136px;top:270px;width:1032px;height:24px;background:linear-gradient(#4a74ad,#3e70b8 40%,#4479c6);border-top:1px solid #6a8cc0"></div>
<svg style="left:1140px;top:274px;" width="17" height="17" viewBox="0 0 17 17"><g transform="scale(0.7391 0.7727)"><rect x="0.5" y="0.5" width="22" height="21" rx="1.5" fill="#c9b27a" stroke="#a08a50" stroke-width="1"/>
<rect x="2.5" y="2.5" width="18" height="7.5" fill="#f0e6c8"/><rect x="2.5" y="12" width="18" height="7.5" fill="#f0e6c8"/>
<rect x="8.5" y="5.5" width="6" height="1.6" fill="#6a5a3a"/><rect x="8.5" y="15" width="6" height="1.6" fill="#6a5a3a"/></g></svg>
<div class="t" style="left:1631.60px;top:274.01px;font-size:17px;color:#fff;font-weight:700;transform:translateX(-50%)">Download</div>
<svg style="left:2110px;top:278px;" width="52" height="10" viewBox="0 0 52 10"><g fill="#d8f4ff"><rect x="3" y="5" width="4.5" height="1.6"/><rect x="23" y="2" width="4.5" height="4.5"/><rect x="23.8" y="3.5" width="3" height="2.2" fill="#3e72bc"/><path d="M44 2 L48.5 6.5 M48.5 2 L44 6.5" stroke="#d8f4ff" stroke-width="1.4"/></g></svg>
<div class="a" style="left:1136px;top:294px;width:1032px;height:28px;background:#efefef"></div>
<div class="a" style="left:1136px;top:322px;width:1032px;height:1px;background:#cfcfcf"></div>
<div class="t" style="left:1148.80px;top:297.92px;font-size:19px;color:#000;">File</div>
<div class="a" style="left:1148.5px;top:317.5px;width:11.5px;height:1.5px;background:#111"></div>
<div class="t" style="left:1198.80px;top:297.92px;font-size:19px;color:#000;">Edit</div>
<div class="a" style="left:1198.5px;top:317.5px;width:12px;height:1.5px;background:#111"></div>
<div class="t" style="left:1249.80px;top:297.92px;font-size:19px;color:#000;">View</div>
<div class="a" style="left:1249.5px;top:317.5px;width:12px;height:1.5px;background:#111"></div>
<div class="t" style="left:1309.80px;top:297.92px;font-size:19px;color:#000;">Go</div>
<div class="a" style="left:1309.5px;top:317.5px;width:14px;height:1.5px;background:#111"></div>
<div class="t" style="left:1354.80px;top:297.92px;font-size:19px;color:#000;">Bookmarks</div>
<div class="a" style="left:1354.5px;top:317.5px;width:12.5px;height:1.5px;background:#111"></div>
<div class="t" style="left:1469.30px;top:297.92px;font-size:19px;color:#000;">Tools</div>
<div class="a" style="left:1469.0px;top:317.5px;width:12.5px;height:1.5px;background:#111"></div>
<div class="t" style="left:1537.30px;top:297.92px;font-size:19px;color:#000;">Help</div>
<div class="a" style="left:1537.0px;top:317.5px;width:14px;height:1.5px;background:#111"></div>
<div class="a" style="left:1136px;top:323px;width:1032px;height:48px;background:linear-gradient(#f8f8f8,#ececec)"></div>
<div class="a" style="left:1136px;top:371px;width:1032px;height:1px;background:#b9b9b9"></div>
<div class="a" style="left:1136px;top:372px;width:1032px;height:3px;background:#e6e6e6"></div>
<div class="a" style="left:1363px;top:330px;width:41px;height:39px;background:#dadada;border:1px solid #b5b5b5;border-radius:3px"></div>
<div class="a" style="left:1358px;top:333px;width:1px;height:34px;background:#d0d0d0"></div>
<div class="a" style="left:1537px;top:333px;width:1px;height:34px;background:#d0d0d0"></div>
<svg style="left:0;top:0" width="2560" height="1600" viewBox="0 0 2560 1600"><g fill="none" stroke="#000" stroke-width="1.6"><path d="M1152.8 339 H1159 V341.5 H1172 V353"/><path d="M1152.8 339 V358.5 H1163.5"/><rect x="1159" y="338.5" width="10.5" height="3" fill="#000" stroke="none"/><path d="M1169 353 V359.5 M1165.5 356.5 H1172.5"/><path d="M1209.5 339.5 L1200 349 L1209.5 358.5"/><path d="M1242.5 339.5 L1252 349 L1242.5 358.5" stroke="#555"/><path d="M1280 353.5 L1290 343.5 L1300 353.5"/><path d="M1341.5 344 A10 10 0 0 0 1323 346.5"/><path d="M1323.5 352.5 A10 10 0 0 0 1342 351"/><path d="M1337 344.5 H1343 V338.5"/><path d="M1327.5 351.5 H1322.5 V357.5"/></g><g fill="#000"><rect x="1382.5" y="338.5" width="11.5" height="9"/><rect x="1373.5" y="349.5" width="8.5" height="9.5"/></g><g fill="none" stroke="#000" stroke-width="1.5"><rect x="1374.5" y="339.5" width="7" height="7"/><rect x="1383.5" y="350.5" width="9.5" height="7.5"/></g><g fill="none" stroke="#000" stroke-width="1.6"><rect x="1416" y="339" width="20.5" height="19.5"/><circle cx="1421.5" cy="344.5" r="2.2"/><path d="M1416.5 356 L1424 348.5 L1428 352 L1431 349 L1436 353.5"/></g><g fill="#000"><rect x="1458" y="338.5" width="21.5" height="1.8"/><rect x="1458" y="343" width="15" height="1.8"/><rect x="1458" y="347.5" width="21.5" height="1.8"/><rect x="1458" y="352" width="15" height="1.8"/><rect x="1458" y="356.5" width="21.5" height="1.8"/></g><g fill="#000"><rect x="1512" y="339.5" width="10.5" height="1.6"/><rect x="1512" y="344" width="10.5" height="1.6"/><rect x="1512" y="350.5" width="6" height="1.6"/><rect x="1512" y="356" width="6" height="1.6"/><rect x="1500.5" y="349" width="8.5" height="9.5"/></g><rect x="1501.3" y="339.3" width="7" height="7" fill="none" stroke="#000" stroke-width="1.5"/></svg>
<div class="a" style="left:1543px;top:330px;width:63px;height:39px;background:linear-gradient(#fbfbfb,#efefef);border:1px solid #bdbdbd;border-radius:3px"></div>
<div class="a" style="left:1608px;top:330px;width:54px;height:39px;background:linear-gradient(#fbfbfb,#efefef);border:1px solid #bdbdbd;border-radius:3px"></div>
<div class="a" style="left:1664px;top:330px;width:86px;height:39px;background:linear-gradient(#fbfbfb,#efefef);border:1px solid #bdbdbd;border-radius:3px"></div>
<div class="a" style="left:1751px;top:330px;width:104px;height:39px;background:#d9d9d9;border:1px solid #bdbdbd;border-radius:3px"></div>
<svg style="left:1550px;top:336px;" width="23" height="26" viewBox="0 0 23 26"><rect x="0.5" y="0.5" width="21.5" height="25" rx="3" fill="#6e6e6e"/><rect x="2.3" y="2" width="18" height="19.5" rx="2" fill="#e8e8e8"/><rect x="6" y="22.5" width="10" height="1.5" fill="#cfcfcf"/></svg>
<div class="t" style="left:1578.50px;top:339.12px;font-size:19px;color:#000;">/</div>
<div class="t" style="left:1635.00px;top:339.12px;font-size:19px;color:#000;transform:translateX(-50%)">root</div>
<div class="t" style="left:1706.50px;top:339.12px;font-size:19px;color:#000;transform:translateX(-50%)">Android</div>
<div class="t" style="left:1803.00px;top:339.12px;font-size:19px;color:#000;transform:translateX(-50%)">Download</div>
<div class="a" style="left:1137px;top:376px;width:321px;height:32px;background:linear-gradient(#fdfdfd,#ececec);border:1px solid #bcbcbc;border-radius:3px"></div>
<div class="t" style="left:1142.00px;top:380.82px;font-size:19px;color:#000;">Lists</div>
<svg style="left:1439px;top:389px;" width="10" height="6" viewBox="0 0 10 6"><path d="M0 0 H9.5 L4.75 5 Z" fill="#333"/></svg>
<div class="t" style="left:1139.80px;top:416.72px;font-size:19px;color:#000;">Places</div>
<svg style="left:1158px;top:445px;" width="26" height="24" viewBox="0 0 26 24"><g transform="scale(0.4727 0.4800)"><path d="M0 1 C0 0.4 0.4 0 1 0 H24 L27 4 H54 C54.6 4 55 4.4 55 5 V20 H0 Z" fill="#2b7cab"/><path d="M0 13 H19 L21 10 H55 V50 H0 Z" fill="#3daee9"/><path d="M27.5 20 L18.5 28 M27.5 20 L36.5 28 M20.5 26.5 V36.5 H34.5 V26.5" fill="none" stroke="#1d4f78" stroke-width="1.1"/><rect x="26" y="30.5" width="3" height="6" fill="#1d4f78"/><rect x="31.5" y="21" width="1.2" height="3" fill="#1d4f78"/></g></svg>
<svg style="left:1158px;top:479px;" width="26" height="23" viewBox="0 0 26 23"><path d="M0 0 H26 V20 H0 Z" fill="#2a9aa4"/><path d="M26 1 V20 H9 L13 13 Z" fill="#c04080"/><path d="M0 14 L10 12 L14 20 H0 Z" fill="#3a5058"/><rect x="0" y="20" width="26" height="2" fill="#505458"/><rect x="1" y="22" width="1.5" height="1" fill="#444"/><rect x="23.5" y="22" width="1.5" height="1" fill="#444"/></svg>
<svg style="left:1158px;top:511px;" width="26" height="25" viewBox="0 0 26 25"><g transform="scale(0.5200 0.5319)">
<defs><linearGradient id="scr26" x1="0" y1="1" x2="1" y2="0"><stop offset="0" stop-color="#b8c070"/><stop offset="0.3" stop-color="#c8a070"/><stop offset="0.5" stop-color="#78b0b8"/><stop offset="0.75" stop-color="#90b0a0"/><stop offset="1" stop-color="#8098c8"/></linearGradient></defs>
<rect x="0" y="0" width="50" height="36.5" rx="1" fill="#383838"/>
<rect x="2" y="1.7" width="47" height="32.3" fill="url(#scr26)"/>
<rect x="4" y="4" width="19.5" height="16" fill="#eef2ec"/>
<rect x="5" y="5" width="5" height="5" fill="#5b9ad8"/><rect x="12.8" y="5" width="4" height="5" fill="#f08040"/><rect x="18.5" y="5" width="4" height="5" fill="#40b030"/>
<rect x="2" y="29.7" width="47" height="4.3" fill="#eef0f2"/>
<rect x="19" y="38" width="13" height="8" fill="#d6dde4"/><rect x="14" y="45" width="23" height="2" fill="#b8c4d0"/>
</g></svg>
<svg style="left:1159px;top:545px;" width="25" height="25" viewBox="0 0 25 25"><defs><radialGradient id="appg" cx="0.4" cy="0.35" r="0.7"><stop offset="0" stop-color="#f4f4f4"/><stop offset="1" stop-color="#c4c4c4"/></radialGradient></defs><circle cx="12.5" cy="12.5" r="11.8" fill="url(#appg)"/><circle cx="12.5" cy="12.5" r="10.8" fill="none" stroke="#4cb828" stroke-width="1.5"/><path d="M10.3 5 H14.7 V11.5 H18 L12.5 18.5 L7 11.5 H10.3 Z" fill="#5cc820"/></svg>
<svg style="left:1158px;top:579px;" width="26" height="25" viewBox="0 0 26 25"><g transform="scale(0.4727 0.5000)"><path d="M0 1 C0 0.4 0.4 0 1 0 H24 L27 4 H54 C54.6 4 55 4.4 55 5 V20 H0 Z" fill="#2b7cab"/><path d="M0 13 H19 L21 10 H55 V50 H0 Z" fill="#3daee9"/><g fill="#0e4f70"><circle cx="33.8" cy="22.4" r="2"/><circle cx="19.9" cy="30" r="2"/><circle cx="33.8" cy="37.7" r="2"/></g><path d="M31.5 24 L22 28.5 M22 31.5 L31.5 36" stroke="#0e4f70" stroke-width="1" stroke-dasharray="1.4 1.6"/></g></svg>
<div class="t" style="left:1194.50px;top:447.22px;font-size:19px;color:#000;">root</div>
<div class="t" style="left:1194.50px;top:479.42px;font-size:19px;color:#000;">Desktop</div>
<div class="t" style="left:1194.50px;top:512.92px;font-size:19px;color:#000;">Computer</div>
<div class="t" style="left:1194.50px;top:546.62px;font-size:19px;color:#000;">Applications</div>
<div class="t" style="left:1194.50px;top:580.52px;font-size:19px;color:#000;">Network</div>
<div class="t" style="left:1139.80px;top:608.22px;font-size:19px;color:#000;">Devices</div>
<div class="t" style="left:1139.80px;top:632.82px;font-size:19px;color:#000;">Bookmarks</div>
<svg style="left:1460px;top:670px;" width="3" height="24" viewBox="0 0 3 24"><g fill="#b8b8b8"><rect x="1" y="1" width="1" height="1"/><rect x="1" y="5" width="1" height="1"/><rect x="1" y="9" width="1" height="1"/><rect x="1" y="13" width="1" height="1"/><rect x="1" y="17" width="1" height="1"/><rect x="1" y="21" width="1" height="1"/></g></svg>
<div class="a" style="left:1464px;top:375px;width:704px;height:613px;background:#fff;border:1px solid #c6c6c6;border-right:none"></div>
<svg class="c" style="left:1531px;top:380px;" width="49" height="62" viewBox="0 0 49 62"><defs><filter id="cpb" x="0" y="0" width="100%" height="100%"><feGaussianBlur stdDeviation="0.45"/></filter></defs><g filter="url(#cpb)"><rect width="49" height="62" fill="#2c4a36"/><rect width="49" height="6" fill="#2a5688"/><g fill="#c8d0dc" opacity=".8"><ellipse cx="6" cy="3" rx="4" ry="1.5"/><ellipse cx="20" cy="3.5" rx="5" ry="1.6"/><ellipse cx="33" cy="3" rx="3" ry="1.4"/><ellipse cx="45" cy="3" rx="3" ry="1.5"/></g><path d="M0 6 L12 9 L25 6 L38 10 L49 7 V14 H0 Z" fill="#2a6a78"/><circle cx="47.1" cy="49.0" r="1.9" fill="#2f5a2c"/><circle cx="41.9" cy="50.9" r="1.0" fill="#2f5a2c"/><circle cx="44.9" cy="15.1" r="1.3" fill="#264a2a"/><circle cx="43.2" cy="30.0" r="1.7" fill="#3d6e34"/><circle cx="6.1" cy="42.3" r="0.9" fill="#2f5a2c"/><circle cx="48.6" cy="9.3" r="1.7" fill="#4a7a3a"/><circle cx="43.5" cy="24.6" r="1.9" fill="#2a5048"/><circle cx="43.7" cy="42.8" r="0.9" fill="#264a2a"/><circle cx="48.3" cy="57.3" r="1.1" fill="#34603a"/><circle cx="20.2" cy="59.5" r="1.0" fill="#34603a"/><circle cx="40.7" cy="35.0" r="1.1" fill="#6a8a60"/><circle cx="46.9" cy="60.3" r="1.2" fill="#1f3e30"/><circle cx="-0.1" cy="51.5" r="1.2" fill="#2f5a2c"/><circle cx="47.7" cy="15.4" r="1.0" fill="#6a8a60"/><circle cx="39.7" cy="55.4" r="0.7" fill="#3d6e34"/><circle cx="9.6" cy="36.7" r="1.2" fill="#4a7a3a"/><circle cx="16.3" cy="58.9" r="1.4" fill="#5a8a48"/><circle cx="29.6" cy="58.9" r="0.7" fill="#34603a"/><circle cx="41.1" cy="33.6" r="1.2" fill="#2f5a2c"/><circle cx="48.9" cy="43.5" r="1.7" fill="#34603a"/><circle cx="41.8" cy="16.1" r="1.7" fill="#4a7a3a"/><circle cx="31.2" cy="51.6" r="0.8" fill="#1f3e30"/><circle cx="6.2" cy="58.8" r="1.5" fill="#4a7a3a"/><circle cx="48.8" cy="33.5" r="1.3" fill="#34603a"/><circle cx="6.5" cy="29.4" r="2.0" fill="#4a7a3a"/><circle cx="3.5" cy="23.7" r="1.7" fill="#2a5048"/><circle cx="17.4" cy="51.4" r="1.7" fill="#2f5a2c"/><circle cx="34.2" cy="24.9" r="1.5" fill="#2f5a2c"/><circle cx="23.2" cy="50.8" r="1.1" fill="#5a8a48"/><circle cx="22.6" cy="53.1" r="1.5" fill="#34603a"/><circle cx="41.2" cy="27.9" r="1.8" fill="#6a8a60"/><circle cx="48.8" cy="60.7" r="1.4" fill="#2a5048"/><circle cx="49.0" cy="19.7" r="1.2" fill="#6a8a60"/><circle cx="20.2" cy="42.3" r="1.4" fill="#1f3e30"/><circle cx="14.4" cy="38.9" r="1.1" fill="#2f5a2c"/><circle cx="9.0" cy="40.7" r="1.5" fill="#4a7a3a"/><circle cx="10.2" cy="46.0" r="1.5" fill="#2f5a2c"/><circle cx="49.3" cy="61.9" r="0.9" fill="#4a7a3a"/><circle cx="4.7" cy="61.3" r="1.3" fill="#2a5048"/><circle cx="0.8" cy="34.1" r="1.2" fill="#3d6e34"/><circle cx="29.1" cy="21.8" r="0.7" fill="#1f3e30"/><circle cx="47.6" cy="55.2" r="1.8" fill="#2a5048"/><circle cx="18.1" cy="10.9" r="1.5" fill="#3d6e34"/><circle cx="14.1" cy="36.7" r="1.1" fill="#34603a"/><circle cx="40.7" cy="31.6" r="1.8" fill="#2a5048"/><circle cx="27.8" cy="60.7" r="2.0" fill="#3d6e34"/><circle cx="16.9" cy="57.2" r="0.7" fill="#3d6e34"/><circle cx="15.6" cy="58.5" r="1.4" fill="#34603a"/><circle cx="31.1" cy="57.1" r="1.2" fill="#1f3e30"/><circle cx="48.8" cy="35.6" r="1.3" fill="#1f3e30"/><circle cx="18.6" cy="55.2" r="0.9" fill="#5a8a48"/><circle cx="0.0" cy="60.0" r="1.1" fill="#5a8a48"/><circle cx="6.3" cy="10.3" r="1.6" fill="#6a8a60"/><circle cx="11.5" cy="11.2" r="0.9" fill="#1f3e30"/><circle cx="-0.3" cy="37.8" r="1.1" fill="#6a8a60"/><circle cx="6.9" cy="62.4" r="1.1" fill="#6a8a60"/><circle cx="25.4" cy="55.6" r="1.8" fill="#3d6e34"/><circle cx="-0.2" cy="15.8" r="1.1" fill="#34603a"/><circle cx="5.8" cy="9.2" r="1.4" fill="#3d6e34"/><circle cx="44.3" cy="38.5" r="0.7" fill="#1f3e30"/><circle cx="29.3" cy="46.2" r="1.5" fill="#1f3e30"/><circle cx="44.8" cy="34.1" r="1.7" fill="#5a8a48"/><circle cx="41.7" cy="46.5" r="1.3" fill="#5a8a48"/><circle cx="7.4" cy="46.5" r="1.9" fill="#34603a"/><circle cx="1.5" cy="48.6" r="1.0" fill="#3d6e34"/><circle cx="35.9" cy="61.8" r="2.0" fill="#6a8a60"/><circle cx="1.5" cy="54.5" r="1.0" fill="#3d6e34"/><circle cx="45.8" cy="17.1" r="1.5" fill="#1f3e30"/><circle cx="3.7" cy="46.0" r="1.3" fill="#34603a"/><circle cx="46.9" cy="29.2" r="0.8" fill="#5a8a48"/><circle cx="6.7" cy="43.1" r="1.4" fill="#2a5048"/><circle cx="11.0" cy="54.0" r="1.1" fill="#4a7a3a"/><circle cx="40.2" cy="55.6" r="1.3" fill="#1f3e30"/><circle cx="8.1" cy="47.5" r="1.6" fill="#3d6e34"/><circle cx="28.2" cy="10.9" r="1.8" fill="#2a5048"/><circle cx="29.3" cy="21.9" r="1.3" fill="#34603a"/><circle cx="4.5" cy="37.7" r="1.4" fill="#1f3e30"/><circle cx="1.7" cy="17.1" r="1.9" fill="#264a2a"/><circle cx="37.2" cy="13.5" r="1.3" fill="#264a2a"/><circle cx="6.1" cy="42.7" r="1.2" fill="#264a2a"/><circle cx="13.8" cy="59.2" r="1.6" fill="#1f3e30"/><circle cx="14.1" cy="43.1" r="1.2" fill="#2f5a2c"/><circle cx="9.3" cy="11.1" r="1.9" fill="#6a8a60"/><circle cx="14.3" cy="59.5" r="1.9" fill="#34603a"/><circle cx="7.1" cy="29.2" r="1.2" fill="#6a8a60"/><circle cx="6.8" cy="22.7" r="1.1" fill="#4a7a3a"/><circle cx="44.7" cy="27.6" r="1.7" fill="#34603a"/><circle cx="46.8" cy="46.1" r="1.6" fill="#6a8a60"/><circle cx="42.3" cy="17.4" r="1.7" fill="#34603a"/><circle cx="7.3" cy="19.9" r="0.7" fill="#264a2a"/><circle cx="32.5" cy="42.3" r="1.6" fill="#5a8a48"/><circle cx="8.4" cy="28.5" r="0.8" fill="#6a8a60"/><circle cx="7.3" cy="22.0" r="1.6" fill="#2f5a2c"/><circle cx="31.9" cy="32.3" r="0.7" fill="#2f5a2c"/><circle cx="0.7" cy="54.1" r="1.8" fill="#34603a"/><circle cx="46.9" cy="47.7" r="1.0" fill="#6a8a60"/><circle cx="3.7" cy="34.4" r="1.6" fill="#2f5a2c"/><circle cx="24.4" cy="51.2" r="0.8" fill="#1f3e30"/><circle cx="21.7" cy="43.6" r="1.9" fill="#264a2a"/><circle cx="8.1" cy="36.5" r="1.2" fill="#2a5048"/><circle cx="10.9" cy="59.1" r="1.7" fill="#3d6e34"/><circle cx="26.6" cy="58.8" r="1.5" fill="#264a2a"/><circle cx="20.6" cy="50.5" r="1.4" fill="#4a7a3a"/><circle cx="36.0" cy="58.3" r="1.1" fill="#6a8a60"/><circle cx="44.5" cy="63.0" r="1.4" fill="#4a7a3a"/><circle cx="40.8" cy="25.9" r="0.9" fill="#3d6e34"/><circle cx="48.4" cy="45.0" r="1.1" fill="#6a8a60"/><circle cx="34.7" cy="11.6" r="1.0" fill="#5a8a48"/><circle cx="44.0" cy="56.8" r="0.8" fill="#34603a"/><circle cx="18.4" cy="50.5" r="0.7" fill="#5a8a48"/><circle cx="32.4" cy="50.0" r="1.4" fill="#6a8a60"/><circle cx="6.3" cy="46.1" r="1.7" fill="#2f5a2c"/><circle cx="40.4" cy="29.6" r="0.9" fill="#3d6e34"/><circle cx="15.5" cy="10.8" r="1.4" fill="#2a5048"/><circle cx="0.4" cy="15.6" r="2.0" fill="#34603a"/><circle cx="21.2" cy="22.9" r="0.7" fill="#2a5048"/><circle cx="-0.4" cy="40.6" r="1.8" fill="#3d6e34"/><circle cx="6.3" cy="50.3" r="1.3" fill="#1f3e30"/><circle cx="5.0" cy="26.1" r="1.9" fill="#6a8a60"/><circle cx="24.1" cy="9.1" r="0.9" fill="#1f3e30"/><circle cx="45.4" cy="21.7" r="1.6" fill="#34603a"/><circle cx="9.3" cy="39.4" r="1.2" fill="#264a2a"/><circle cx="17.7" cy="52.7" r="1.8" fill="#2f5a2c"/><circle cx="41.4" cy="35.5" r="0.7" fill="#4a7a3a"/><circle cx="46.0" cy="52.0" r="1.7" fill="#6a8a60"/><circle cx="33.8" cy="55.6" r="1.5" fill="#264a2a"/><circle cx="18.2" cy="9.5" r="1.4" fill="#4a7a3a"/><circle cx="40.5" cy="10.2" r="1.6" fill="#5a8a48"/><circle cx="28.5" cy="59.5" r="1.4" fill="#2f5a2c"/><circle cx="26.4" cy="52.1" r="1.2" fill="#2f5a2c"/><circle cx="3.0" cy="13.7" r="1.2" fill="#1f3e30"/><circle cx="14.6" cy="59.2" r="1.1" fill="#264a2a"/><circle cx="2.7" cy="49.7" r="1.6" fill="#5a8a48"/><circle cx="44.8" cy="46.1" r="1.8" fill="#2a5048"/><circle cx="9.6" cy="36.9" r="1.9" fill="#264a2a"/><circle cx="16.4" cy="51.4" r="1.3" fill="#2f5a2c"/><circle cx="44.4" cy="46.2" r="2.0" fill="#264a2a"/><circle cx="44.2" cy="20.5" r="1.1" fill="#5a8a48"/><circle cx="39.7" cy="13.2" r="0.8" fill="#1f3e30"/><circle cx="27.9" cy="53.8" r="1.8" fill="#1f3e30"/><circle cx="45.1" cy="25.3" r="1.1" fill="#34603a"/><circle cx="8.5" cy="10.6" r="0.9" fill="#2a5048"/><circle cx="41.6" cy="60.7" r="1.1" fill="#6a8a60"/><circle cx="31.9" cy="59.0" r="1.0" fill="#6a8a60"/><circle cx="41.8" cy="9.1" r="1.6" fill="#3d6e34"/><circle cx="3.7" cy="17.2" r="1.5" fill="#3d6e34"/><circle cx="38.2" cy="18.9" r="1.4" fill="#3d6e34"/><circle cx="17.6" cy="53.0" r="1.0" fill="#34603a"/><circle cx="24.3" cy="61.0" r="1.9" fill="#3d6e34"/><circle cx="24.0" cy="59.6" r="1.6" fill="#2f5a2c"/><circle cx="5.0" cy="34.9" r="1.2" fill="#264a2a"/><circle cx="45.8" cy="29.6" r="1.1" fill="#6a8a60"/><circle cx="31.8" cy="50.4" r="0.8" fill="#3d6e34"/><circle cx="25.5" cy="11.7" r="1.2" fill="#264a2a"/><circle cx="48.3" cy="38.9" r="1.3" fill="#4a7a3a"/><circle cx="26.6" cy="29.9" r="0.8" fill="#34603a"/><circle cx="5.6" cy="13.5" r="1.8" fill="#4a7a3a"/><circle cx="17.4" cy="9.9" r="1.0" fill="#6a8a60"/><circle cx="47.8" cy="55.9" r="0.8" fill="#264a2a"/><circle cx="8.9" cy="52.4" r="0.7" fill="#2a5048"/><circle cx="3.4" cy="24.1" r="1.9" fill="#6a8a60"/><circle cx="24.9" cy="11.9" r="1.2" fill="#2a5048"/><circle cx="21.2" cy="41.1" r="1.5" fill="#2f5a2c"/><circle cx="10.0" cy="31.8" r="1.6" fill="#1f3e30"/><circle cx="45.7" cy="29.4" r="2.0" fill="#4a7a3a"/><circle cx="44.5" cy="17.0" r="1.7" fill="#1f3e30"/><circle cx="41.5" cy="13.1" r="1.2" fill="#1f3e30"/><circle cx="7.6" cy="33.7" r="0.8" fill="#1f3e30"/><circle cx="0.8" cy="31.1" r="0.9" fill="#2f5a2c"/><circle cx="40.4" cy="13.6" r="0.9" fill="#34603a"/><circle cx="44.7" cy="57.2" r="1.4" fill="#5a8a48"/><circle cx="4.7" cy="43.7" r="1.2" fill="#34603a"/><circle cx="45.2" cy="38.6" r="1.3" fill="#264a2a"/><circle cx="48.2" cy="16.6" r="0.7" fill="#2f5a2c"/><circle cx="35.0" cy="9.4" r="1.7" fill="#1f3e30"/><circle cx="10.9" cy="47.7" r="1.0" fill="#5a8a48"/><circle cx="1.9" cy="36.0" r="0.7" fill="#1f3e30"/><circle cx="44.1" cy="50.9" r="1.4" fill="#6a8a60"/><circle cx="22.0" cy="44.4" r="1.2" fill="#2a5048"/><rect x="7" y="7" width="5" height="15" fill="#c89860"/><rect x="8" y="9" width="3" height="5" fill="#e0b880"/><rect x="37" y="6" width="7" height="13" fill="#9a4a34"/><path d="M37 10 L40.5 4 L44 10 Z" fill="#c07040"/><rect x="0" y="28" width="7" height="16" fill="#5a5070" opacity=".6"/><rect x="12" y="26" width="9" height="18" fill="#e0d4a4"/><rect x="13" y="23" width="3" height="4" fill="#e8dcb4"/><rect x="21" y="16" width="6" height="30" fill="#e4d2a6"/><rect x="22" y="12" width="4" height="5" fill="#3a6a90"/><rect x="22" y="19" width="4" height="2" fill="#f4ead0"/><rect x="30" y="26" width="6" height="20" fill="#e8c8b4"/><rect x="30.5" y="23" width="5" height="4" fill="#d8d8d0"/><rect x="27" y="34" width="3" height="10" fill="#c8b8a8"/><rect x="22" y="41" width="20" height="12" fill="#5e90a8"/><rect x="24" y="44" width="5" height="7" fill="#9a4a44"/><rect x="34" y="44" width="5" height="7" fill="#a85a44"/><rect x="40" y="39" width="3" height="14" fill="#6aa0b4"/><rect x="21" y="40" width="2.5" height="12" fill="#6a98ac"/><circle cx="19.1" cy="54.9" r="2.0" fill="#8a8a90"/><circle cx="45.7" cy="51.0" r="1.4" fill="#264a2a"/><circle cx="25.9" cy="55.1" r="2.1" fill="#5a8a48"/><circle cx="40.1" cy="54.9" r="1.4" fill="#6a8a60"/><circle cx="17.2" cy="56.4" r="1.6" fill="#264a2a"/><circle cx="27.8" cy="50.5" r="1.8" fill="#3d6e34"/><circle cx="16.8" cy="51.9" r="2.2" fill="#5a8a48"/><circle cx="39.9" cy="56.3" r="1.0" fill="#3d6e34"/><circle cx="12.8" cy="60.8" r="1.7" fill="#1f3e30"/><circle cx="8.1" cy="60.3" r="1.8" fill="#8a8a90"/><circle cx="42.9" cy="55.7" r="2.1" fill="#4a7a3a"/><circle cx="29.1" cy="57.4" r="2.1" fill="#34603a"/><circle cx="27.5" cy="50.1" r="0.9" fill="#8a8a90"/><circle cx="24.2" cy="61.3" r="0.9" fill="#8a8a90"/><circle cx="20.2" cy="55.4" r="1.5" fill="#6a8a60"/><circle cx="30.0" cy="52.9" r="2.1" fill="#3d6e34"/><circle cx="34.6" cy="59.3" r="1.6" fill="#2f5a2c"/><circle cx="3.3" cy="56.0" r="1.7" fill="#2a5048"/><circle cx="35.3" cy="50.9" r="1.7" fill="#5a8a48"/><circle cx="5.9" cy="59.8" r="1.2" fill="#5a8a48"/><circle cx="14.7" cy="61.4" r="1.3" fill="#a08070"/><circle cx="44.2" cy="56.1" r="1.0" fill="#264a2a"/><circle cx="46.2" cy="54.1" r="1.7" fill="#6a8a60"/><circle cx="4.3" cy="54.6" r="0.9" fill="#1f3e30"/><circle cx="21.4" cy="56.7" r="1.4" fill="#264a2a"/><circle cx="6.8" cy="56.4" r="1.8" fill="#6a8a60"/><circle cx="45.8" cy="54.5" r="0.8" fill="#1f3e30"/><circle cx="13.1" cy="56.4" r="1.6" fill="#264a2a"/><circle cx="27.2" cy="58.6" r="1.4" fill="#5a8a48"/><circle cx="41.0" cy="53.8" r="1.0" fill="#5a8a48"/><circle cx="20.8" cy="61.0" r="1.5" fill="#6a8a60"/><circle cx="30.8" cy="58.3" r="2.1" fill="#3d6e34"/><circle cx="33.8" cy="51.4" r="0.9" fill="#a08070"/><circle cx="13.9" cy="59.8" r="1.1" fill="#2a5048"/><circle cx="18.8" cy="58.3" r="1.8" fill="#5a8a48"/><circle cx="4.9" cy="61.2" r="2.0" fill="#5a8a48"/><circle cx="3.2" cy="59.3" r="1.4" fill="#1f3e30"/><circle cx="3.1" cy="53.9" r="1.1" fill="#3d6e34"/><circle cx="38.7" cy="61.7" r="1.5" fill="#3d6e34"/><circle cx="22.6" cy="50.9" r="1.4" fill="#8a8a90"/></g></svg>
<div class="a" style="left:1483.5px;top:442px;width:143.5px;height:50px;background:linear-gradient(#f0f5fc,#e2ecf8);border:1px solid #b0cce8;border-radius:2px"></div>
<div class="t" style="left:1555.00px;top:444.92px;font-size:19px;color:#000;transform:translateX(-50%)">Neuschwanstein</div>
<div class="t" style="left:1555.00px;top:467.72px;font-size:19px;color:#000;transform:translateX(-50%)">Castle.jpg</div>
<svg class="c" style="left:1705px;top:387px;" width="62" height="48" viewBox="0 0 80 80" preserveAspectRatio="none"><rect width="80" height="80" fill="#fff"/><rect x="0" y="0" width="80" height="1.6" fill="#3a5a88"/><rect x="0" y="2" width="80" height="8" fill="#f2f2f2"/><g fill="#999"><rect x="1" y="3" width="3" height="1"/><rect x="6" y="3" width="2" height="1"/><rect x="10" y="3" width="3" height="1"/><rect x="16" y="3" width="3" height="1"/><rect x="8" y="6" width="2" height="2"/><rect x="13" y="6" width="2" height="2"/><rect x="20" y="6" width="2" height="2"/><rect x="28" y="5" width="15" height="3" fill="#ccc"/></g><rect x="0" y="10" width="21" height="63" fill="#e9e9e9"/><rect x="0" y="13" width="20" height="1" fill="#bbb"/><rect x="0" y="17" width="21" height="3" fill="#2a7fe0"/><g fill="#555"><rect x="0" y="24" width="2" height="1"/><rect x="0" y="27" width="2" height="1"/><rect x="0" y="30" width="2" height="1"/><rect x="0" y="32" width="1" height="1"/></g><rect x="28" y="11" width="6" height="5" fill="#3a9ee0"/><rect x="28" y="10.4" width="3" height="1" fill="#2a80c0"/><rect x="27.5" y="18" width="7" height="0.8" fill="#777" opacity=".6"/><rect x="46" y="11" width="6" height="5" fill="#3a9ee0"/><rect x="46" y="10.4" width="3" height="1" fill="#2a80c0"/><rect x="45.5" y="18" width="7" height="0.8" fill="#777" opacity=".6"/><rect x="64" y="11" width="6" height="5" fill="#3a7aa0"/><rect x="64" y="10.4" width="3" height="1" fill="#2a80c0"/><rect x="63.5" y="18" width="7" height="0.8" fill="#777" opacity=".6"/><rect x="28" y="26" width="6" height="5" fill="#3a9ee0"/><rect x="28" y="25.4" width="3" height="1" fill="#2a80c0"/><rect x="27.5" y="33" width="7" height="0.8" fill="#777" opacity=".6"/><rect x="46" y="26" width="6" height="5" fill="#3a9ee0"/><rect x="46" y="25.4" width="3" height="1" fill="#2a80c0"/><rect x="45.5" y="33" width="7" height="0.8" fill="#777" opacity=".6"/><rect x="64" y="26" width="6" height="5" fill="#3a9ee0"/><rect x="64" y="25.4" width="3" height="1" fill="#2a80c0"/><rect x="63.5" y="33" width="7" height="0.8" fill="#777" opacity=".6"/><rect x="28" y="41" width="6" height="5" fill="#3a9ee0"/><rect x="28" y="40.4" width="3" height="1" fill="#2a80c0"/><rect x="27.5" y="48" width="7" height="0.8" fill="#777" opacity=".6"/><rect x="46" y="41" width="6" height="5" fill="#3a9ee0"/><rect x="46" y="40.4" width="3" height="1" fill="#2a80c0"/><rect x="45.5" y="48" width="7" height="0.8" fill="#777" opacity=".6"/><rect x="64" y="41" width="6" height="5" fill="#3a9ee0"/><rect x="64" y="40.4" width="3" height="1" fill="#2a80c0"/><rect x="63.5" y="48" width="7" height="0.8" fill="#777" opacity=".6"/><rect x="28" y="56" width="6" height="5" fill="#3a9ee0"/><rect x="28" y="55.4" width="3" height="1" fill="#2a80c0"/><rect x="27.5" y="63" width="7" height="0.8" fill="#777" opacity=".6"/><rect x="62" y="11" width="6" height="5" fill="#3a8a9a"/><path d="M68 11 V16 H63 Z" fill="#c03a6a"/><rect x="0" y="73" width="80" height="4" fill="#8a0000"/><rect x="34" y="74.3" width="12" height="1.2" fill="#f0b0b0"/><rect x="0" y="77" width="80" height="3" fill="#ededed"/><rect x="1" y="78" width="4" height="1" fill="#333"/><rect x="60" y="78" width="19" height="1" fill="#555"/></svg>
<div class="t" style="left:1735.50px;top:444.92px;font-size:19px;color:#000;transform:translateX(-50%)">Screenshot from</div>
<div class="t" style="left:1735.50px;top:467.72px;font-size:19px;color:#000;transform:translateX(-50%)">Linux.jpg</div>
<div class="a" style="left:1139px;top:998px;width:1026px;height:36px;background:#7c0000;border-radius:4px"></div>
<div class="t" style="left:1652.30px;top:1005.69px;font-size:19.5px;color:#fff;font-weight:700;transform:translateX(-50%)">Root Instance</div>
<div class="t" style="left:1144.00px;top:1042.72px;font-size:19px;color:#000;">2 item(s)</div>
<div class="t" style="right:425.50px;top:1042.72px;font-size:19px;color:#000;">Free space: 24.8 GiB (Total: 29.4 GiB)</div>
<div class="a" style="left:1136px;top:1068px;width:1032px;height:1px;background:#555"></div>
<div class="a" style="left:1136px;top:1069px;width:1032px;height:2px;background:#f4f4f4"></div>
<div class="a" style="left:826px;top:1166px;width:1651px;height:41px;background:#efefef"></div>
<div class="a" style="left:868px;top:1170px;width:29px;height:3.6px;background:#1e88f0"></div>
<div class="a" style="left:1050px;top:1170px;width:276px;height:3.6px;background:#1e88f0"></div>
<div class="a" style="left:1334px;top:1170px;width:276px;height:3.6px;background:#d8d8d8"></div>
<svg style="left:830px;top:1170px;" width="32" height="30" viewBox="0 0 32 30"><path d="M2.5 5.5 C6 8 9.5 10.5 13.5 13.5" fill="none" stroke="#1a1a1a" stroke-width="2"/><path d="M14.2 13 C12.8 9 14 5 17.5 4.3 C20 3.9 21.8 5 22.6 6.3 L29 8.2 L22 8.4 C20.5 7 18.5 6.8 17.2 8 C15.5 10 16.5 13 18.5 15.8 C20.5 18.5 21.5 21 20.5 23.5 C19.8 25 18.7 25.8 17.5 26" fill="none" stroke="#1a1a1a" stroke-width="2.1"/></svg>
<div class="t" style="left:877.00px;top:1179.26px;font-size:18px;color:#000;">1</div>
<div class="t" style="left:912.50px;top:1179.26px;font-size:18px;color:#6e6e6e;">2</div>
<div class="t" style="left:948.50px;top:1179.26px;font-size:18px;color:#6e6e6e;">3</div>
<div class="t" style="left:984.50px;top:1179.26px;font-size:18px;color:#6e6e6e;">4</div>
<div class="a" style="left:1015px;top:1176.5px;width:23px;height:22.5px;background:#3a3f40;border-radius:2px"></div>
<svg style="left:1015px;top:1176.5px;" width="23" height="23" viewBox="0 0 23 23"><path d="M9 6 L14 11.5 L9 17" fill="none" stroke="#ddd" stroke-width="1.2"/></svg>
<svg style="left:1056px;top:1178px;" width="22" height="22" viewBox="0 0 22 22"><g transform="scale(0.9565 1.0000)"><rect x="0.5" y="0.5" width="22" height="21" rx="1.5" fill="#c9b27a" stroke="#a08a50" stroke-width="1"/>
<rect x="2.5" y="2.5" width="18" height="7.5" fill="#f0e6c8"/><rect x="2.5" y="12" width="18" height="7.5" fill="#f0e6c8"/>
<rect x="8.5" y="5.5" width="6" height="1.6" fill="#6a5a3a"/><rect x="8.5" y="15" width="6" height="1.6" fill="#6a5a3a"/></g></svg>
<div class="t" style="left:1081.60px;top:1178.99px;font-size:19.5px;color:#222;transform:scaleX(0.955);transform-origin:0 0">Download</div>
<svg style="left:1336px;top:1176px;" width="27" height="24" viewBox="0 0 27 24"><path d="M1 3 C3 8 6 12 10 14" fill="none" stroke="#1a90d0" stroke-width="2"/><path d="M10.5 14 C8 10 10 3 15 2.5 C18 2.2 20 3.5 21 5 L26.5 6.5 L20.5 6.8 C18 5 14 5 13 8 C12 11 15 14 16 18 C16.5 21 15 23 13 23.5" fill="none" stroke="#1a90d0" stroke-width="2"/><path d="M16 5 C15 6 16 7 17 6" stroke="#111" stroke-width="1.5" fill="none"/></svg>
<div class="t" style="left:1364.50px;top:1178.99px;font-size:19.5px;color:#7a7a7a;transform:scaleX(0.955);transform-origin:0 0">Crash Report</div>
<svg style="left:2309px;top:1178px;" width="22" height="22" viewBox="0 0 22 22"><path d="M4 16 C5.5 14 5.5 12 5.5 9 C5.5 5 7.5 2.5 11 2.5 C14.5 2.5 16.5 5 16.5 9 C16.5 12 16.5 14 18 16 Z" fill="none" stroke="#000" stroke-width="1.6" stroke-linejoin="round"/><rect x="2.5" y="15.5" width="17" height="1.6" fill="#000"/><circle cx="11" cy="19" r="2" fill="#000"/><rect x="10.3" y="0.5" width="1.4" height="2.5" fill="#000"/></svg>
<svg style="left:2349px;top:1177px;" width="16" height="24" viewBox="0 0 16 24"><rect x="3" y="0" width="10" height="6" fill="#d8c070"/><rect x="4.5" y="1" width="1.3" height="3" fill="#555"/><rect x="7.3" y="1" width="1.3" height="3" fill="#555"/><rect x="10" y="1" width="1.3" height="3" fill="#555"/><rect x="0" y="6" width="16" height="17" fill="#2a90e8"/><path d="M6 12 L9 14.5 L6 17" stroke="#fff" stroke-width="1" fill="none"/></svg>
<svg style="left:2386px;top:1178px;" width="21" height="20" viewBox="0 0 21 20"><rect x="0" y="0" width="21" height="20" fill="#e03040"/><path d="M4 4 L17 16 M17 4 L4 16" stroke="#fff" stroke-width="2.6"/></svg>
<svg style="left:2446px;top:1180px;" width="20" height="19" viewBox="0 0 20 19"><path d="M1 1 H19 V12 L12 18 H1 Z" fill="none" stroke="#111" stroke-width="1.6"/><path d="M4 15 H10" stroke="#111" stroke-width="1.4"/></svg>
</div>
<div class="a" style="left:710px;top:1399px;width:1139px;height:153px;border-radius:77px;background:#efeff6;box-shadow:0 2px 10px rgba(60,60,80,0.10)"></div>
<svg style="left:760px;top:1432px;" width="90" height="90" viewBox="0 0 90 90"><g fill="#3f4048"><circle cx="24.5" cy="24.4" r="12"/><circle cx="59.7" cy="24.4" r="12"/><circle cx="24.5" cy="59.4" r="12"/></g>
<circle cx="59.9" cy="59.4" r="9.3" fill="none" stroke="#3f4048" stroke-width="5.2"/><path d="M66.5 66 L77 76.5" stroke="#3f4048" stroke-width="5.5" stroke-linecap="butt"/></svg>
<div class="a" style="left:898px;top:1440px;width:4px;height:70px;border-radius:2px;background:#6e6f77"></div>
<svg style="left:961px;top:1422px;" width="106" height="106" viewBox="0 0 106 106"><circle cx="53" cy="53" r="52.5" fill="#8fd4e0"/><circle cx="53" cy="53" r="42.5" fill="#f4f4f4"/>
<g transform="translate(11.4 11.4) scale(1.04)"><g fill="#000">
<path d="M20 44.8 C19.3 36 22 28.5 28 24.5 C34 20.5 42 19 49.5 18.8 L51.5 17.3 L54.5 18.6 C57.5 19.3 59.8 20.5 60.8 22.2 C59.8 23.8 58 25 55 26.2 C52.5 27.2 50.5 28.3 49 29.8 L50.8 35.5 L54.2 44.8 L49.2 44.8 L47.2 39.2 C44.5 41.5 40 43 34 44 L30.5 44.8 Z"/>
<path d="M3.6 45.9 H76.4 L75.2 50.5 L74 54.8 H6.5 L5 50.5 Z"/>
<path d="M34 56.2 H47.2 C48 62 51.5 66 58.8 68 L59.2 68.8 H21.8 L22.2 68 C29.5 66 33 62 34 56.2 Z"/>
</g>
<path d="M25.5 43.5 C27.5 38 30.5 33.5 34.5 30.5 M35 42.5 C38.5 40.5 42 39 45.5 37.8" stroke="#fff" stroke-width="1.3" fill="none"/></g></svg>
<svg style="left:1114px;top:1423px;" width="104" height="104" viewBox="0 0 104 104"><g transform="translate(52 52)">
<path d="M0 0 L-45.03 -26 A52 52 0 0 1 45.03 -26 Z" fill="#db3a2c"/>
<path d="M0 0 L45.03 -26 A52 52 0 0 1 0 52 Z" fill="#f2bd1a"/>
<path d="M0 0 L0 52 A52 52 0 0 1 -45.03 -26 Z" fill="#1e973f"/>
<path d="M0 -26 L45.03 -26 L22.5 13 Z" fill="#f2bd1a"/>
<path d="M22.5 13 L0 52 L-22.5 13 Z" fill="#1e973f"/>
<path d="M-22.5 13 L-45.03 -26 L0 -26 Z" fill="#db3a2c"/>
<circle r="26" fill="#fff"/><circle r="20.5" fill="#1a73e3"/></g></svg>
<svg style="left:1265px;top:1422px;" width="106" height="106" viewBox="0 0 106 106"><circle cx="53" cy="53" r="52.5" fill="#b9cdf0"/><circle cx="53" cy="53" r="42.3" fill="#4a88e8"/><defs><clipPath id="fdc"><circle cx="53" cy="53" r="42.3"/></clipPath></defs><path d="M28 74 H77.4 V38 L110 70 V110 H64 Z" fill="#2a5cc0" opacity="0.2" clip-path="url(#fdc)"/>
<path d="M28 34.5 C28 33 29 32 30.5 32 H48.5 L54 38 H74.5 C76 38 77.4 39.3 77.4 41 V71.5 C77.4 73 76 74.2 74.5 74.2 H30.5 C29 74.2 28 73 28 71.5 Z" fill="#efefef"/></svg>
<svg style="left:1417px;top:1422px;" width="106" height="106" viewBox="0 0 106 106"><circle cx="53" cy="53" r="52.5" fill="#e8d184"/><circle cx="53" cy="53" r="42.2" fill="#f5f5f7"/>
<g transform="translate(32.5 27.5)">
<path d="M1.5 1.5 C0.5 2.5 0 3.5 0 5 V46 C0 47.5 0.5 48.5 1.5 49.5 L22 25.5 Z" fill="#4285f4"/>
<path d="M1.5 1.5 C3 0 5 -0.3 7 0.8 L32 15 L22 25.5 Z" fill="#34a853"/>
<path d="M1.5 49.5 C3 51 5 51.3 7 50.2 L32 36 L22 25.5 Z" fill="#ea4335"/>
<path d="M32 15 L42.5 21 C45.5 22.8 45.5 28.2 42.5 30 L32 36 L22 25.5 Z" fill="#fbbc04"/>
</g></svg>
<svg style="left:1569px;top:1422px;" width="106" height="106" viewBox="0 0 106 106"><circle cx="53" cy="53" r="52.5" fill="#b9cff4"/><circle cx="53" cy="53" r="42.2" fill="#f5f6f9"/>
<g transform="translate(31 27)">
<path d="M12 1 C10 0 8 0.5 6.5 1.8 C1.5 6 -0.5 12 0.8 19 C3.5 33 15 46 30 50.5 C36 52 41.5 50.5 45 46 C46 44.5 46 42.5 44.5 41 L37 34 C35.5 32.5 33 32.5 31.5 34 L27.5 38 C20 34 14.5 28 11.5 20.5 L15.5 16.5 C17 15 17.2 12.5 16 11 Z" fill="#0b57d0"/>
<path d="M12 1 C10.5 0.2 9 0.2 7.5 1 L13.5 16 C15 17 16 17 17 15.5 C17.5 14 17.5 12.5 16.8 11 Z" fill="#4f86f7"/>
<path d="M45 46 C46 44.5 46 42.5 44.5 41 L37 34 C35.5 32.5 33 32.5 31.5 34 L29 37 L43 47.5 Z" fill="#4f86f7"/>
<path d="M9 8 C7 15 9 22 13 28 C17 34 23 38.5 28.5 40.5 L30 38.8 C24.5 36.5 19 32.5 15.5 27 C12 21.5 10.5 15 11.5 9 Z" fill="#7aa6f8"/>
</g></svg>
<svg style="left:1721px;top:1422px;" width="106" height="106" viewBox="0 0 106 106"><circle cx="53" cy="53" r="52.5" fill="#b9cff4"/><circle cx="53" cy="53" r="42.2" fill="#f5f6f9"/>
<g transform="translate(25 27)">
<path d="M17 0 H36 C45 0 51.6 6 51.6 14 C51.6 16 51.3 17.5 50.5 19 L6 30 C2 26 0 21 0 16 C0 7 7 0 17 0 Z" fill="#7ba3f4"/>
<path d="M6 26 C5 17 12 10 24 10 H40 C49 10 56 16 56 25.5 C56 34 49 41 40 41 H29.5 V54 L6.5 30 Z" fill="#5b8af2"/>
<path d="M19 9 H38 C45.5 9 51 14 51 21.5 C51 29 45.5 34 38 34 H19 C10.5 34 4.8 29 4.8 21.5 C4.8 14 10.5 9 19 9 Z" fill="#0b5ad6"/>
</g></svg>
</body></html>
